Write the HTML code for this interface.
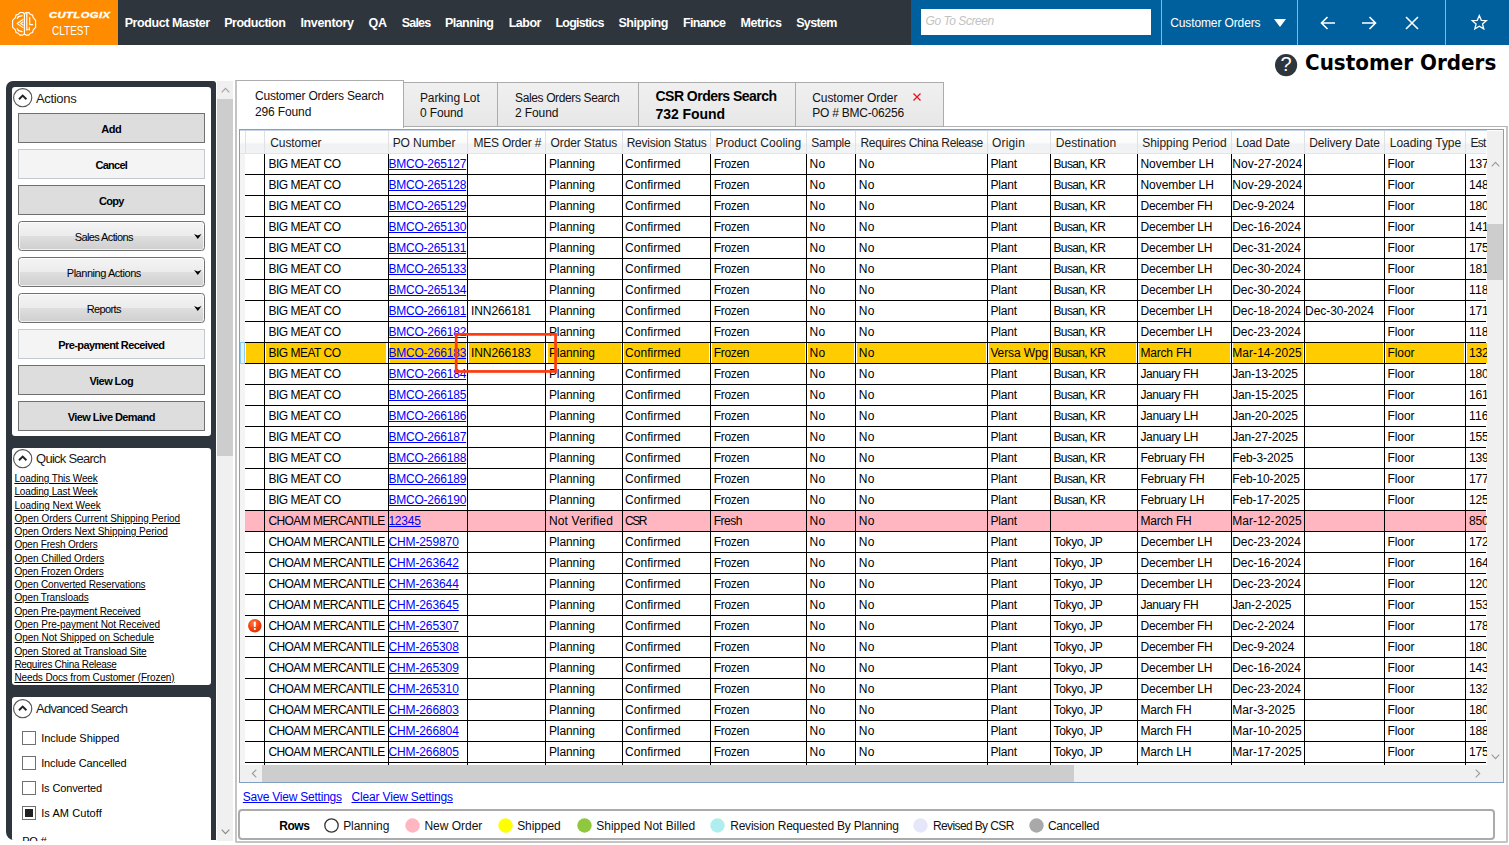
<!DOCTYPE html>
<html lang="en"><head><meta charset="utf-8"><title>Customer Orders</title>
<style>
html,body{margin:0;padding:0;background:#fff;}
body{width:1509px;height:845px;position:relative;overflow:hidden;font-family:"Liberation Sans",Arial,sans-serif;font-size:12px;color:#000;}
.b{position:absolute;box-sizing:border-box;}
.t{position:absolute;white-space:nowrap;}
svg{position:absolute;overflow:visible;}
a{color:inherit;}
</style></head><body>

<div class="b" style="left:0.00px;top:0.00px;width:1509.00px;height:45.00px;background:#2e353d;"></div>
<div class="b" style="left:0.00px;top:0.00px;width:117.50px;height:45.00px;background:#ff8c00;"></div>
<div class="b" style="left:910.50px;top:0.00px;width:598.50px;height:45.00px;background:#00609e;"></div>
<div class="b" style="left:921.40px;top:9.00px;width:229.20px;height:26.30px;background:#fff;"></div>
<span class="t" style="left:925.60px;top:13.34px;font-size:12px;line-height:16px;color:#c2c2c2;letter-spacing:-0.467px;font-style:italic;">Go To Screen</span>
<div class="b" style="left:1161.00px;top:0.00px;width:1.00px;height:45.00px;background:rgba(255,255,255,.55);"></div>
<div class="b" style="left:1297.00px;top:0.00px;width:1.00px;height:45.00px;background:rgba(255,255,255,.55);"></div>
<div class="b" style="left:1445.00px;top:0.00px;width:1.00px;height:45.00px;background:rgba(255,255,255,.55);"></div>
<span class="t" style="left:1170.20px;top:15.14px;font-size:12px;line-height:16px;color:#fff;letter-spacing:-0.117px;">Customer Orders</span>
<svg style="left:1273.5px;top:18.5px" width="12" height="8" viewBox="0 0 12 8"><path d="M0 0H12L6 8Z" fill="#fff"/></svg>
<svg style="left:1319px;top:14px" width="18" height="18" viewBox="0 0 18 18" fill="none" stroke="#fff" stroke-width="1.6"><path d="M16 9H2.5M8.5 3L2.5 9L8.5 15"/></svg>
<svg style="left:1360px;top:14px" width="18" height="18" viewBox="0 0 18 18" fill="none" stroke="#fff" stroke-width="1.6"><path d="M2 9H15.5M9.5 3L15.5 9L9.5 15"/></svg>
<svg style="left:1402.5px;top:14px" width="18" height="18" viewBox="0 0 18 18" fill="none" stroke="#fff" stroke-width="1.6"><path d="M3 3L15 15M15 3L3 15"/></svg>
<svg style="left:1470.6px;top:14.3px" width="16.6" height="16.6" viewBox="0 0 19 19" fill="none" stroke="#fff" stroke-width="1.5" stroke-linejoin="miter"><path d="M9.5 1.8L11.8 7.2L17.6 7.6L13.2 11.4L14.6 17.1L9.5 14L4.4 17.1L5.8 11.4L1.4 7.6L7.2 7.2Z"/></svg>
<span class="t" style="left:124.70px;top:15.07px;font-size:12.5px;line-height:17px;color:#fff;letter-spacing:-0.432px;font-weight:bold;">Product Master</span>
<span class="t" style="left:224.20px;top:15.07px;font-size:12.5px;line-height:17px;color:#fff;letter-spacing:-0.477px;font-weight:bold;">Production</span>
<span class="t" style="left:300.45px;top:15.07px;font-size:12.5px;line-height:17px;color:#fff;letter-spacing:-0.340px;font-weight:bold;">Inventory</span>
<span class="t" style="left:368.45px;top:15.07px;font-size:12.5px;line-height:17px;color:#fff;letter-spacing:-0.275px;font-weight:bold;">QA</span>
<span class="t" style="left:401.70px;top:15.07px;font-size:12.5px;line-height:17px;color:#fff;letter-spacing:-0.793px;font-weight:bold;">Sales</span>
<span class="t" style="left:444.95px;top:15.07px;font-size:12.5px;line-height:17px;color:#fff;letter-spacing:-0.541px;font-weight:bold;">Planning</span>
<span class="t" style="left:508.70px;top:15.07px;font-size:12.5px;line-height:17px;color:#fff;letter-spacing:-0.505px;font-weight:bold;">Labor</span>
<span class="t" style="left:555.45px;top:15.07px;font-size:12.5px;line-height:17px;color:#fff;letter-spacing:-0.741px;font-weight:bold;">Logistics</span>
<span class="t" style="left:618.45px;top:15.07px;font-size:12.5px;line-height:17px;color:#fff;letter-spacing:-0.501px;font-weight:bold;">Shipping</span>
<span class="t" style="left:682.95px;top:15.07px;font-size:12.5px;line-height:17px;color:#fff;letter-spacing:-0.684px;font-weight:bold;">Finance</span>
<span class="t" style="left:740.45px;top:15.07px;font-size:12.5px;line-height:17px;color:#fff;letter-spacing:-0.367px;font-weight:bold;">Metrics</span>
<span class="t" style="left:796.20px;top:15.07px;font-size:12.5px;line-height:17px;color:#fff;letter-spacing:-0.670px;font-weight:bold;">System</span>
<svg style="left:12.1px;top:11.8px" width="24" height="24" viewBox="0 0 24 24" fill="none" stroke="#fff" stroke-width="1.15" stroke-linejoin="round" stroke-linecap="round">
<path d="M12.4 1.7L10.8 0.5L8 0.5L6.3 2.3L4 3.1L3.4 5.7L0.6 8.3V15.3L3.4 17.9L4 20.5L6.3 21.3L8 23.1H10.8L12.4 21.9L14 23.1H16.6L18.3 21.3L20.6 20.5L21.2 17.9L23.6 15.3V8.3L21.2 5.7L20.6 3.1L18.3 2.3L16.6 0.5L14 0.5Z"/>
<path d="M12.4 1.7V21.9"/>
<path d="M10.2 3.6L6.6 4.6L5.2 6.4M11 7.6L5 11.4L11 15.6M11 10.1L8.6 11.5L11 13.1M5.2 16.6L6.6 18.6L10.2 19.6" stroke-width="1.15"/>
<path d="M14.8 2.2V18.2M17.7 5.4V12.6H20.7M17.3 15.2V18" stroke-width="1.15"/>
<circle cx="6.3" cy="4.7" r="0.7" fill="#fff" stroke="none"/><circle cx="6.3" cy="18.5" r="0.7" fill="#fff" stroke="none"/><circle cx="14.8" cy="1.9" r="0.8" fill="#fff" stroke="none"/><circle cx="15.8" cy="17.4" r="0.7" fill="#fff" stroke="none"/><circle cx="17.4" cy="17.4" r="0.7" fill="#fff" stroke="none"/>
</svg>
<span class="t" style="left:49.00px;top:9.22px;font-size:8.6px;line-height:12px;color:#fff;letter-spacing:0.350px;font-weight:bold;font-style:italic;-webkit-text-stroke:0.35px #fff;transform-origin:0 50%;transform:scaleX(1.302);">CUTLOGIX</span>
<span class="t" style="left:52.20px;top:22.73px;font-size:12.6px;line-height:17px;color:#fff;transform-origin:0 50%;transform:scaleX(0.794);">CLTEST</span>
<svg style="left:1274.9px;top:53.6px" width="22.2" height="22.2" viewBox="0 0 22.2 22.2"><circle cx="11.1" cy="11.1" r="11.1" fill="#2e353d"/></svg>
<span class="t" style="left:1286.00px;top:51.17px;font-size:20px;line-height:27px;color:#fff;transform:translateX(-50%);">?</span>
<span class="t" style="left:1305.20px;top:47.88px;font-size:21.6px;line-height:29px;color:#000;font-weight:bold;font-family:'DejaVu Sans','Liberation Sans',sans-serif;transform-origin:0 50%;transform:scaleX(0.9232);">Customer Orders</span>
<div class="b" style="left:6.4px;top:81.2px;width:209.6px;height:759.3px;background:#2e353d;border-radius:7px 3px 0 8px;overflow:hidden;">
<div class="b" style="left:5.60px;top:5.80px;width:199.00px;height:348.80px;background:#fff;border-radius:3px;"></div>
<div class="b" style="left:5.60px;top:366.60px;width:199.00px;height:237.50px;background:#fff;border-radius:3px;"></div>
<div class="b" style="left:5.60px;top:616.30px;width:199.00px;height:162.50px;background:#fff;border-radius:3px;"></div>
</div>
<svg style="left:13.3px;top:88.30px" width="19.4" height="19.4" viewBox="0 0 19.4 19.4" fill="none"><circle cx="9.7" cy="9.7" r="9.1" stroke="#555" stroke-width="1.15" fill="#fff"/><path d="M6 11.3L9.7 7.6L13.4 11.3" stroke="#222" stroke-width="1.9"/></svg>
<span class="t" style="left:36.00px;top:89.60px;font-size:13px;line-height:17px;color:#1a1a1a;letter-spacing:-0.333px;">Actions</span>
<svg style="left:13.3px;top:449.00px" width="19.4" height="19.4" viewBox="0 0 19.4 19.4" fill="none"><circle cx="9.7" cy="9.7" r="9.1" stroke="#555" stroke-width="1.15" fill="#fff"/><path d="M6 11.3L9.7 7.6L13.4 11.3" stroke="#222" stroke-width="1.9"/></svg>
<span class="t" style="left:36.00px;top:450.30px;font-size:13px;line-height:17px;color:#1a1a1a;letter-spacing:-0.719px;">Quick Search</span>
<svg style="left:13.3px;top:698.60px" width="19.4" height="19.4" viewBox="0 0 19.4 19.4" fill="none"><circle cx="9.7" cy="9.7" r="9.1" stroke="#555" stroke-width="1.15" fill="#fff"/><path d="M6 11.3L9.7 7.6L13.4 11.3" stroke="#222" stroke-width="1.9"/></svg>
<span class="t" style="left:36.00px;top:699.90px;font-size:13px;line-height:17px;color:#1a1a1a;letter-spacing:-0.762px;">Advanced Search</span>
<div class="b" style="left:17.50px;top:113.40px;width:187.50px;height:29.50px;background:#dddddd;border:1px solid #707070;"></div>
<span class="t" style="left:111.30px;top:121.54px;font-size:11px;line-height:15px;color:#000;letter-spacing:-0.494px;font-weight:bold;transform:translateX(-50%);">Add</span>
<div class="b" style="left:17.50px;top:149.40px;width:187.50px;height:29.50px;background:#f4f4f4;border:1px solid #c3c9ce;"></div>
<span class="t" style="left:111.30px;top:157.54px;font-size:11px;line-height:15px;color:#000;letter-spacing:-0.746px;font-weight:bold;transform:translateX(-50%);">Cancel</span>
<div class="b" style="left:17.50px;top:185.40px;width:187.50px;height:29.50px;background:#dddddd;border:1px solid #707070;"></div>
<span class="t" style="left:111.30px;top:193.54px;font-size:11px;line-height:15px;color:#000;letter-spacing:-0.725px;font-weight:bold;transform:translateX(-50%);">Copy</span>
<div class="b" style="left:17.50px;top:329.40px;width:187.50px;height:29.50px;background:#f4f4f4;border:1px solid #c3c9ce;"></div>
<span class="t" style="left:111.30px;top:337.54px;font-size:11px;line-height:15px;color:#000;letter-spacing:-0.595px;font-weight:bold;transform:translateX(-50%);">Pre-payment Received</span>
<div class="b" style="left:17.50px;top:365.40px;width:187.50px;height:29.50px;background:#dddddd;border:1px solid #707070;"></div>
<span class="t" style="left:111.30px;top:373.54px;font-size:11px;line-height:15px;color:#000;letter-spacing:-0.573px;font-weight:bold;transform:translateX(-50%);">View Log</span>
<div class="b" style="left:17.50px;top:401.40px;width:187.50px;height:29.50px;background:#dddddd;border:1px solid #707070;"></div>
<span class="t" style="left:111.30px;top:409.54px;font-size:11px;line-height:15px;color:#000;letter-spacing:-0.574px;font-weight:bold;transform:translateX(-50%);">View Live Demand</span>
<div class="b" style="left:17.50px;top:221.00px;width:187.50px;height:30.00px;background:linear-gradient(#f4f4f4 0%,#ececec 49%,#dedede 51%,#cfcfcf 100%);border:1px solid #707070;border-radius:3.5px;box-shadow:inset 0 0 0 1px rgba(255,255,255,.7);"></div>
<span class="t" style="left:103.80px;top:229.59px;font-size:11px;line-height:15px;color:#000;letter-spacing:-0.611px;transform:translateX(-50%);">Sales Actions</span>
<svg style="left:193.7px;top:233.80px" width="7.6" height="4.9" viewBox="0 0 7.6 4.9"><path d="M0 0L3.8 1.5L7.6 0L3.8 4.9Z" fill="#000"/></svg>
<div class="b" style="left:17.50px;top:257.00px;width:187.50px;height:30.00px;background:linear-gradient(#f4f4f4 0%,#ececec 49%,#dedede 51%,#cfcfcf 100%);border:1px solid #707070;border-radius:3.5px;box-shadow:inset 0 0 0 1px rgba(255,255,255,.7);"></div>
<span class="t" style="left:103.80px;top:265.59px;font-size:11px;line-height:15px;color:#000;letter-spacing:-0.452px;transform:translateX(-50%);">Planning Actions</span>
<svg style="left:193.7px;top:269.80px" width="7.6" height="4.9" viewBox="0 0 7.6 4.9"><path d="M0 0L3.8 1.5L7.6 0L3.8 4.9Z" fill="#000"/></svg>
<div class="b" style="left:17.50px;top:293.00px;width:187.50px;height:30.00px;background:linear-gradient(#f4f4f4 0%,#ececec 49%,#dedede 51%,#cfcfcf 100%);border:1px solid #707070;border-radius:3.5px;box-shadow:inset 0 0 0 1px rgba(255,255,255,.7);"></div>
<span class="t" style="left:103.80px;top:301.59px;font-size:11px;line-height:15px;color:#000;letter-spacing:-0.631px;transform:translateX(-50%);">Reports</span>
<svg style="left:193.7px;top:305.80px" width="7.6" height="4.9" viewBox="0 0 7.6 4.9"><path d="M0 0L3.8 1.5L7.6 0L3.8 4.9Z" fill="#000"/></svg>
<span class="t" style="left:14.40px;top:472.04px;font-size:10px;line-height:13px;color:#000;letter-spacing:-0.115px;text-decoration:underline;">Loading This Week</span>
<span class="t" style="left:14.40px;top:485.04px;font-size:10px;line-height:13px;color:#000;letter-spacing:-0.134px;text-decoration:underline;">Loading Last Week</span>
<span class="t" style="left:14.40px;top:499.04px;font-size:10px;line-height:13px;color:#000;letter-spacing:-0.039px;text-decoration:underline;">Loading Next Week</span>
<span class="t" style="left:14.40px;top:512.03px;font-size:10px;line-height:13px;color:#000;letter-spacing:-0.045px;text-decoration:underline;">Open Orders Current Shipping Period</span>
<span class="t" style="left:14.40px;top:525.03px;font-size:10px;line-height:13px;color:#000;letter-spacing:-0.037px;text-decoration:underline;">Open Orders Next Shipping Period</span>
<span class="t" style="left:14.40px;top:538.03px;font-size:10px;line-height:13px;color:#000;letter-spacing:-0.179px;text-decoration:underline;">Open Fresh Orders</span>
<span class="t" style="left:14.40px;top:552.03px;font-size:10px;line-height:13px;color:#000;letter-spacing:-0.070px;text-decoration:underline;">Open Chilled Orders</span>
<span class="t" style="left:14.40px;top:565.03px;font-size:10px;line-height:13px;color:#000;letter-spacing:-0.137px;text-decoration:underline;">Open Frozen Orders</span>
<span class="t" style="left:14.40px;top:578.03px;font-size:10px;line-height:13px;color:#000;letter-spacing:-0.127px;text-decoration:underline;">Open Converted Reservations</span>
<span class="t" style="left:14.40px;top:591.03px;font-size:10px;line-height:13px;color:#000;letter-spacing:-0.129px;text-decoration:underline;">Open Transloads</span>
<span class="t" style="left:14.40px;top:605.03px;font-size:10px;line-height:13px;color:#000;letter-spacing:-0.113px;text-decoration:underline;">Open Pre-payment Received</span>
<span class="t" style="left:14.40px;top:618.03px;font-size:10px;line-height:13px;color:#000;letter-spacing:-0.058px;text-decoration:underline;">Open Pre-payment Not Received</span>
<span class="t" style="left:14.40px;top:631.03px;font-size:10px;line-height:13px;color:#000;letter-spacing:-0.033px;text-decoration:underline;">Open Not Shipped on Schedule</span>
<span class="t" style="left:14.40px;top:645.03px;font-size:10px;line-height:13px;color:#000;letter-spacing:-0.081px;text-decoration:underline;">Open Stored at Transload Site</span>
<span class="t" style="left:14.40px;top:658.03px;font-size:10px;line-height:13px;color:#000;letter-spacing:-0.290px;text-decoration:underline;">Requires China Release</span>
<span class="t" style="left:14.40px;top:671.03px;font-size:10px;line-height:13px;color:#000;letter-spacing:-0.115px;text-decoration:underline;">Needs Docs from Customer (Frozen)</span>
<div class="b" style="left:22.30px;top:731.30px;width:14.00px;height:14.00px;background:#fff;border:1px solid #707070;"></div>
<span class="t" style="left:41.20px;top:730.99px;font-size:11px;line-height:15px;color:#000;letter-spacing:-0.046px;">Include Shipped</span>
<div class="b" style="left:22.30px;top:756.30px;width:14.00px;height:14.00px;background:#fff;border:1px solid #707070;"></div>
<span class="t" style="left:41.20px;top:755.99px;font-size:11px;line-height:15px;color:#000;letter-spacing:-0.124px;">Include Cancelled</span>
<div class="b" style="left:22.30px;top:781.30px;width:14.00px;height:14.00px;background:#fff;border:1px solid #707070;"></div>
<span class="t" style="left:41.20px;top:780.99px;font-size:11px;line-height:15px;color:#000;letter-spacing:-0.124px;">Is Converted</span>
<div class="b" style="left:22.30px;top:806.30px;width:14.00px;height:14.00px;background:#fff;border:1px solid #707070;"></div>
<div class="b" style="left:25.30px;top:809.30px;width:8.00px;height:8.00px;background:#212121;"></div>
<span class="t" style="left:41.20px;top:805.99px;font-size:11px;line-height:15px;color:#000;letter-spacing:0.081px;">Is AM Cutoff</span>
<div class="b" style="left:12px;top:826px;width:199px;height:14.5px;overflow:hidden;">
<span class="t" style="left:10.30px;top:7.69px;font-size:11px;line-height:15px;color:#000;letter-spacing:-0.274px;">PO #</span>
</div>
<div class="b" style="left:216.50px;top:81.00px;width:16.30px;height:760.00px;background:#f0f0f0;"></div>
<div class="b" style="left:216.50px;top:98.50px;width:16.30px;height:357.00px;background:#cdcdcd;"></div>
<svg style="left:220.5px;top:87px" width="9" height="6" viewBox="0 0 9 6" fill="none" stroke="#a3a3a3" stroke-width="1.2"><path d="M0.7 5.3L4.5 1.3L8.3 5.3"/></svg>
<svg style="left:220.5px;top:829px" width="9" height="6" viewBox="0 0 9 6" fill="none" stroke="#8a8a8a" stroke-width="1.2"><path d="M0.7 0.7L4.5 4.7L8.3 0.7"/></svg>
<div class="b" style="left:235.00px;top:126.00px;width:1273.00px;height:716.70px;background:#fff;border:2px solid #c4c4c4;border-top:1px solid #b4b4b4;border-radius:0 0 2px 2px;"></div>
<div class="b" style="left:402.00px;top:82.00px;width:95.50px;height:45.00px;background:linear-gradient(#f0f0f0,#e7e7e7);border:1px solid #acacac;"></div>
<div class="b" style="left:496.50px;top:82.00px;width:142.00px;height:45.00px;background:linear-gradient(#f0f0f0,#e7e7e7);border:1px solid #acacac;"></div>
<div class="b" style="left:637.50px;top:82.00px;width:158.00px;height:45.00px;background:linear-gradient(#f0f0f0,#e7e7e7);border:1px solid #acacac;"></div>
<div class="b" style="left:794.50px;top:82.00px;width:149.50px;height:45.00px;background:linear-gradient(#f0f0f0,#e7e7e7);border:1px solid #acacac;"></div>
<div class="b" style="left:235.00px;top:79.50px;width:169.00px;height:48.00px;background:#fff;border:1px solid #acacac;border-bottom:none;border-left:2px solid #c4c4c4;"></div>
<span class="t" style="left:255.00px;top:88.04px;font-size:12px;line-height:16px;color:#111;letter-spacing:-0.208px;">Customer Orders Search</span>
<span class="t" style="left:255.00px;top:103.74px;font-size:12px;line-height:16px;color:#111;letter-spacing:-0.131px;">296 Found</span>
<span class="t" style="left:419.90px;top:89.64px;font-size:12px;line-height:16px;color:#111;letter-spacing:-0.088px;">Parking Lot</span>
<span class="t" style="left:419.90px;top:105.44px;font-size:12px;line-height:16px;color:#111;letter-spacing:-0.110px;">0 Found</span>
<span class="t" style="left:515.00px;top:89.64px;font-size:12px;line-height:16px;color:#111;letter-spacing:-0.368px;">Sales Orders Search</span>
<span class="t" style="left:515.00px;top:105.44px;font-size:12px;line-height:16px;color:#111;letter-spacing:-0.110px;">2 Found</span>
<span class="t" style="left:655.50px;top:86.65px;font-size:14px;line-height:19px;color:#000;letter-spacing:-0.526px;font-weight:bold;">CSR Orders Search</span>
<span class="t" style="left:655.50px;top:104.85px;font-size:14px;line-height:19px;color:#000;letter-spacing:-0.057px;font-weight:bold;">732 Found</span>
<span class="t" style="left:812.20px;top:89.64px;font-size:12px;line-height:16px;color:#111;letter-spacing:-0.060px;">Customer Order</span>
<span class="t" style="left:812.20px;top:105.44px;font-size:12px;line-height:16px;color:#111;letter-spacing:-0.218px;">PO # BMC-06256</span>
<svg style="left:913px;top:92.5px" width="8" height="8" viewBox="0 0 8 8" fill="none" stroke="#e81123" stroke-width="1.3"><path d="M0.5 0.5L7.5 7.5M7.5 0.5L0.5 7.5"/></svg>
<div class="b" style="left:238.70px;top:129.00px;width:1265.50px;height:653.90px;background:#fff;border:1px solid #7f9fc4;"></div>
<div class="b" style="left:0;top:0;width:1486.5px;height:764.5px;overflow:hidden;">
<div class="b" style="left:239.70px;top:130.00px;width:1246.80px;height:23.50px;background:linear-gradient(#ffffff 0%,#fcfcfd 50%,#f0f1f3 62%,#f3f4f6 100%);"></div>
<div class="b" style="left:239.70px;top:130.00px;width:1263.50px;height:1.00px;background:#c5d4e6;"></div>
<div class="b" style="left:239.70px;top:153.00px;width:1246.80px;height:1.00px;background:#e2e4e8;"></div>
<div class="b" style="left:239.70px;top:153.50px;width:5.50px;height:611.00px;background:#f4f4f5;"></div>
<div class="b" style="left:245.00px;top:131.00px;width:1.00px;height:22.00px;background:#dfe1e5;"></div>
<div class="b" style="left:264.00px;top:131.00px;width:1.00px;height:22.00px;background:#dfe1e5;"></div>
<div class="b" style="left:388.00px;top:131.00px;width:1.00px;height:22.00px;background:#dfe1e5;"></div>
<div class="b" style="left:467.00px;top:131.00px;width:1.00px;height:22.00px;background:#dfe1e5;"></div>
<div class="b" style="left:545.00px;top:131.00px;width:1.00px;height:22.00px;background:#dfe1e5;"></div>
<div class="b" style="left:622.00px;top:131.00px;width:1.00px;height:22.00px;background:#dfe1e5;"></div>
<div class="b" style="left:710.00px;top:131.00px;width:1.00px;height:22.00px;background:#dfe1e5;"></div>
<div class="b" style="left:806.00px;top:131.00px;width:1.00px;height:22.00px;background:#dfe1e5;"></div>
<div class="b" style="left:855.00px;top:131.00px;width:1.00px;height:22.00px;background:#dfe1e5;"></div>
<div class="b" style="left:987.00px;top:131.00px;width:1.00px;height:22.00px;background:#dfe1e5;"></div>
<div class="b" style="left:1050.00px;top:131.00px;width:1.00px;height:22.00px;background:#dfe1e5;"></div>
<div class="b" style="left:1137.00px;top:131.00px;width:1.00px;height:22.00px;background:#dfe1e5;"></div>
<div class="b" style="left:1231.00px;top:131.00px;width:1.00px;height:22.00px;background:#dfe1e5;"></div>
<div class="b" style="left:1304.00px;top:131.00px;width:1.00px;height:22.00px;background:#dfe1e5;"></div>
<div class="b" style="left:1384.00px;top:131.00px;width:1.00px;height:22.00px;background:#dfe1e5;"></div>
<div class="b" style="left:1465.00px;top:131.00px;width:1.00px;height:22.00px;background:#dfe1e5;"></div>
<span class="t" style="left:270.30px;top:134.54px;font-size:12px;line-height:16px;color:#1c1c1c;letter-spacing:-0.106px;">Customer</span>
<span class="t" style="left:392.70px;top:134.54px;font-size:12px;line-height:16px;color:#1c1c1c;letter-spacing:-0.080px;">PO Number</span>
<span class="t" style="left:473.50px;top:134.54px;font-size:12px;line-height:16px;color:#1c1c1c;letter-spacing:-0.219px;">MES Order #</span>
<span class="t" style="left:550.60px;top:134.54px;font-size:12px;line-height:16px;color:#1c1c1c;letter-spacing:-0.128px;">Order Status</span>
<span class="t" style="left:626.70px;top:134.54px;font-size:12px;line-height:16px;color:#1c1c1c;letter-spacing:-0.245px;">Revision Status</span>
<span class="t" style="left:715.40px;top:134.54px;font-size:12px;line-height:16px;color:#1c1c1c;letter-spacing:0.028px;">Product Cooling</span>
<span class="t" style="left:811.30px;top:134.54px;font-size:12px;line-height:16px;color:#1c1c1c;letter-spacing:-0.276px;">Sample</span>
<span class="t" style="left:860.50px;top:134.54px;font-size:12px;line-height:16px;color:#1c1c1c;letter-spacing:-0.348px;">Requires China Release</span>
<span class="t" style="left:992.10px;top:134.54px;font-size:12px;line-height:16px;color:#1c1c1c;letter-spacing:0.142px;">Origin</span>
<span class="t" style="left:1055.80px;top:134.54px;font-size:12px;line-height:16px;color:#1c1c1c;letter-spacing:0.036px;">Destination</span>
<span class="t" style="left:1142.20px;top:134.54px;font-size:12px;line-height:16px;color:#1c1c1c;letter-spacing:-0.024px;">Shipping Period</span>
<span class="t" style="left:1235.90px;top:134.54px;font-size:12px;line-height:16px;color:#1c1c1c;letter-spacing:-0.153px;">Load Date</span>
<span class="t" style="left:1309.20px;top:134.54px;font-size:12px;line-height:16px;color:#1c1c1c;letter-spacing:-0.105px;">Delivery Date</span>
<span class="t" style="left:1389.80px;top:134.54px;font-size:12px;line-height:16px;color:#1c1c1c;letter-spacing:-0.046px;">Loading Type</span>
<span class="t" style="left:1470.40px;top:134.54px;font-size:12px;line-height:16px;color:#1c1c1c;letter-spacing:-0.703px;">Est</span>
<span class="t" style="left:268.40px;top:155.84px;font-size:12px;line-height:16px;color:#000;letter-spacing:-0.484px;">BIG MEAT CO</span>
<span class="t" style="left:388.40px;top:155.84px;font-size:12px;line-height:16px;color:#0000ff;letter-spacing:-0.209px;text-decoration:underline;">BMCO-265127</span>
<span class="t" style="left:548.90px;top:155.84px;font-size:12px;line-height:16px;color:#000;letter-spacing:-0.084px;">Planning</span>
<span class="t" style="left:625.00px;top:155.84px;font-size:12px;line-height:16px;color:#000;letter-spacing:0.041px;">Confirmed</span>
<span class="t" style="left:713.70px;top:155.84px;font-size:12px;line-height:16px;color:#000;letter-spacing:-0.299px;">Frozen</span>
<span class="t" style="left:809.60px;top:155.84px;font-size:12px;line-height:16px;color:#000;letter-spacing:0.337px;">No</span>
<span class="t" style="left:858.80px;top:155.84px;font-size:12px;line-height:16px;color:#000;letter-spacing:0.337px;">No</span>
<span class="t" style="left:990.40px;top:155.84px;font-size:12px;line-height:16px;color:#000;letter-spacing:-0.155px;">Plant</span>
<span class="t" style="left:1053.50px;top:155.84px;font-size:12px;line-height:16px;color:#000;letter-spacing:-0.633px;">Busan, KR</span>
<span class="t" style="left:1140.50px;top:155.84px;font-size:12px;line-height:16px;color:#000;letter-spacing:-0.065px;">November LH</span>
<span class="t" style="left:1232.20px;top:155.84px;font-size:12px;line-height:16px;color:#000;letter-spacing:0.072px;">Nov-27-2024</span>
<span class="t" style="left:1387.50px;top:155.84px;font-size:12px;line-height:16px;color:#000;letter-spacing:-0.066px;">Floor</span>
<span class="t" style="left:1469.10px;top:155.84px;font-size:12px;line-height:16px;color:#000;letter-spacing:-0.205px;">137</span>
<span class="t" style="left:268.40px;top:176.84px;font-size:12px;line-height:16px;color:#000;letter-spacing:-0.484px;">BIG MEAT CO</span>
<span class="t" style="left:388.40px;top:176.84px;font-size:12px;line-height:16px;color:#0000ff;letter-spacing:-0.209px;text-decoration:underline;">BMCO-265128</span>
<span class="t" style="left:548.90px;top:176.84px;font-size:12px;line-height:16px;color:#000;letter-spacing:-0.084px;">Planning</span>
<span class="t" style="left:625.00px;top:176.84px;font-size:12px;line-height:16px;color:#000;letter-spacing:0.041px;">Confirmed</span>
<span class="t" style="left:713.70px;top:176.84px;font-size:12px;line-height:16px;color:#000;letter-spacing:-0.299px;">Frozen</span>
<span class="t" style="left:809.60px;top:176.84px;font-size:12px;line-height:16px;color:#000;letter-spacing:0.337px;">No</span>
<span class="t" style="left:858.80px;top:176.84px;font-size:12px;line-height:16px;color:#000;letter-spacing:0.337px;">No</span>
<span class="t" style="left:990.40px;top:176.84px;font-size:12px;line-height:16px;color:#000;letter-spacing:-0.155px;">Plant</span>
<span class="t" style="left:1053.50px;top:176.84px;font-size:12px;line-height:16px;color:#000;letter-spacing:-0.633px;">Busan, KR</span>
<span class="t" style="left:1140.50px;top:176.84px;font-size:12px;line-height:16px;color:#000;letter-spacing:-0.065px;">November LH</span>
<span class="t" style="left:1232.20px;top:176.84px;font-size:12px;line-height:16px;color:#000;letter-spacing:0.072px;">Nov-29-2024</span>
<span class="t" style="left:1387.50px;top:176.84px;font-size:12px;line-height:16px;color:#000;letter-spacing:-0.066px;">Floor</span>
<span class="t" style="left:1469.10px;top:176.84px;font-size:12px;line-height:16px;color:#000;letter-spacing:-0.205px;">148</span>
<span class="t" style="left:268.40px;top:197.84px;font-size:12px;line-height:16px;color:#000;letter-spacing:-0.484px;">BIG MEAT CO</span>
<span class="t" style="left:388.40px;top:197.84px;font-size:12px;line-height:16px;color:#0000ff;letter-spacing:-0.209px;text-decoration:underline;">BMCO-265129</span>
<span class="t" style="left:548.90px;top:197.84px;font-size:12px;line-height:16px;color:#000;letter-spacing:-0.084px;">Planning</span>
<span class="t" style="left:625.00px;top:197.84px;font-size:12px;line-height:16px;color:#000;letter-spacing:0.041px;">Confirmed</span>
<span class="t" style="left:713.70px;top:197.84px;font-size:12px;line-height:16px;color:#000;letter-spacing:-0.299px;">Frozen</span>
<span class="t" style="left:809.60px;top:197.84px;font-size:12px;line-height:16px;color:#000;letter-spacing:0.337px;">No</span>
<span class="t" style="left:858.80px;top:197.84px;font-size:12px;line-height:16px;color:#000;letter-spacing:0.337px;">No</span>
<span class="t" style="left:990.40px;top:197.84px;font-size:12px;line-height:16px;color:#000;letter-spacing:-0.155px;">Plant</span>
<span class="t" style="left:1053.50px;top:197.84px;font-size:12px;line-height:16px;color:#000;letter-spacing:-0.633px;">Busan, KR</span>
<span class="t" style="left:1140.50px;top:197.84px;font-size:12px;line-height:16px;color:#000;letter-spacing:-0.244px;">December FH</span>
<span class="t" style="left:1232.20px;top:197.84px;font-size:12px;line-height:16px;color:#000;letter-spacing:-0.052px;">Dec-9-2024</span>
<span class="t" style="left:1387.50px;top:197.84px;font-size:12px;line-height:16px;color:#000;letter-spacing:-0.066px;">Floor</span>
<span class="t" style="left:1469.10px;top:197.84px;font-size:12px;line-height:16px;color:#000;letter-spacing:-0.205px;">180</span>
<span class="t" style="left:268.40px;top:218.84px;font-size:12px;line-height:16px;color:#000;letter-spacing:-0.484px;">BIG MEAT CO</span>
<span class="t" style="left:388.40px;top:218.84px;font-size:12px;line-height:16px;color:#0000ff;letter-spacing:-0.209px;text-decoration:underline;">BMCO-265130</span>
<span class="t" style="left:548.90px;top:218.84px;font-size:12px;line-height:16px;color:#000;letter-spacing:-0.084px;">Planning</span>
<span class="t" style="left:625.00px;top:218.84px;font-size:12px;line-height:16px;color:#000;letter-spacing:0.041px;">Confirmed</span>
<span class="t" style="left:713.70px;top:218.84px;font-size:12px;line-height:16px;color:#000;letter-spacing:-0.299px;">Frozen</span>
<span class="t" style="left:809.60px;top:218.84px;font-size:12px;line-height:16px;color:#000;letter-spacing:0.337px;">No</span>
<span class="t" style="left:858.80px;top:218.84px;font-size:12px;line-height:16px;color:#000;letter-spacing:0.337px;">No</span>
<span class="t" style="left:990.40px;top:218.84px;font-size:12px;line-height:16px;color:#000;letter-spacing:-0.155px;">Plant</span>
<span class="t" style="left:1053.50px;top:218.84px;font-size:12px;line-height:16px;color:#000;letter-spacing:-0.633px;">Busan, KR</span>
<span class="t" style="left:1140.50px;top:218.84px;font-size:12px;line-height:16px;color:#000;letter-spacing:-0.204px;">December LH</span>
<span class="t" style="left:1232.20px;top:218.84px;font-size:12px;line-height:16px;color:#000;letter-spacing:-0.066px;">Dec-16-2024</span>
<span class="t" style="left:1387.50px;top:218.84px;font-size:12px;line-height:16px;color:#000;letter-spacing:-0.066px;">Floor</span>
<span class="t" style="left:1469.10px;top:218.84px;font-size:12px;line-height:16px;color:#000;letter-spacing:-0.205px;">141</span>
<span class="t" style="left:268.40px;top:239.84px;font-size:12px;line-height:16px;color:#000;letter-spacing:-0.484px;">BIG MEAT CO</span>
<span class="t" style="left:388.40px;top:239.84px;font-size:12px;line-height:16px;color:#0000ff;letter-spacing:-0.209px;text-decoration:underline;">BMCO-265131</span>
<span class="t" style="left:548.90px;top:239.84px;font-size:12px;line-height:16px;color:#000;letter-spacing:-0.084px;">Planning</span>
<span class="t" style="left:625.00px;top:239.84px;font-size:12px;line-height:16px;color:#000;letter-spacing:0.041px;">Confirmed</span>
<span class="t" style="left:713.70px;top:239.84px;font-size:12px;line-height:16px;color:#000;letter-spacing:-0.299px;">Frozen</span>
<span class="t" style="left:809.60px;top:239.84px;font-size:12px;line-height:16px;color:#000;letter-spacing:0.337px;">No</span>
<span class="t" style="left:858.80px;top:239.84px;font-size:12px;line-height:16px;color:#000;letter-spacing:0.337px;">No</span>
<span class="t" style="left:990.40px;top:239.84px;font-size:12px;line-height:16px;color:#000;letter-spacing:-0.155px;">Plant</span>
<span class="t" style="left:1053.50px;top:239.84px;font-size:12px;line-height:16px;color:#000;letter-spacing:-0.633px;">Busan, KR</span>
<span class="t" style="left:1140.50px;top:239.84px;font-size:12px;line-height:16px;color:#000;letter-spacing:-0.204px;">December LH</span>
<span class="t" style="left:1232.20px;top:239.84px;font-size:12px;line-height:16px;color:#000;letter-spacing:-0.066px;">Dec-31-2024</span>
<span class="t" style="left:1387.50px;top:239.84px;font-size:12px;line-height:16px;color:#000;letter-spacing:-0.066px;">Floor</span>
<span class="t" style="left:1469.10px;top:239.84px;font-size:12px;line-height:16px;color:#000;letter-spacing:-0.205px;">175</span>
<span class="t" style="left:268.40px;top:260.84px;font-size:12px;line-height:16px;color:#000;letter-spacing:-0.484px;">BIG MEAT CO</span>
<span class="t" style="left:388.40px;top:260.84px;font-size:12px;line-height:16px;color:#0000ff;letter-spacing:-0.209px;text-decoration:underline;">BMCO-265133</span>
<span class="t" style="left:548.90px;top:260.84px;font-size:12px;line-height:16px;color:#000;letter-spacing:-0.084px;">Planning</span>
<span class="t" style="left:625.00px;top:260.84px;font-size:12px;line-height:16px;color:#000;letter-spacing:0.041px;">Confirmed</span>
<span class="t" style="left:713.70px;top:260.84px;font-size:12px;line-height:16px;color:#000;letter-spacing:-0.299px;">Frozen</span>
<span class="t" style="left:809.60px;top:260.84px;font-size:12px;line-height:16px;color:#000;letter-spacing:0.337px;">No</span>
<span class="t" style="left:858.80px;top:260.84px;font-size:12px;line-height:16px;color:#000;letter-spacing:0.337px;">No</span>
<span class="t" style="left:990.40px;top:260.84px;font-size:12px;line-height:16px;color:#000;letter-spacing:-0.155px;">Plant</span>
<span class="t" style="left:1053.50px;top:260.84px;font-size:12px;line-height:16px;color:#000;letter-spacing:-0.633px;">Busan, KR</span>
<span class="t" style="left:1140.50px;top:260.84px;font-size:12px;line-height:16px;color:#000;letter-spacing:-0.204px;">December LH</span>
<span class="t" style="left:1232.20px;top:260.84px;font-size:12px;line-height:16px;color:#000;letter-spacing:-0.066px;">Dec-30-2024</span>
<span class="t" style="left:1387.50px;top:260.84px;font-size:12px;line-height:16px;color:#000;letter-spacing:-0.066px;">Floor</span>
<span class="t" style="left:1469.10px;top:260.84px;font-size:12px;line-height:16px;color:#000;letter-spacing:-0.205px;">181</span>
<span class="t" style="left:268.40px;top:281.84px;font-size:12px;line-height:16px;color:#000;letter-spacing:-0.484px;">BIG MEAT CO</span>
<span class="t" style="left:388.40px;top:281.84px;font-size:12px;line-height:16px;color:#0000ff;letter-spacing:-0.209px;text-decoration:underline;">BMCO-265134</span>
<span class="t" style="left:548.90px;top:281.84px;font-size:12px;line-height:16px;color:#000;letter-spacing:-0.084px;">Planning</span>
<span class="t" style="left:625.00px;top:281.84px;font-size:12px;line-height:16px;color:#000;letter-spacing:0.041px;">Confirmed</span>
<span class="t" style="left:713.70px;top:281.84px;font-size:12px;line-height:16px;color:#000;letter-spacing:-0.299px;">Frozen</span>
<span class="t" style="left:809.60px;top:281.84px;font-size:12px;line-height:16px;color:#000;letter-spacing:0.337px;">No</span>
<span class="t" style="left:858.80px;top:281.84px;font-size:12px;line-height:16px;color:#000;letter-spacing:0.337px;">No</span>
<span class="t" style="left:990.40px;top:281.84px;font-size:12px;line-height:16px;color:#000;letter-spacing:-0.155px;">Plant</span>
<span class="t" style="left:1053.50px;top:281.84px;font-size:12px;line-height:16px;color:#000;letter-spacing:-0.633px;">Busan, KR</span>
<span class="t" style="left:1140.50px;top:281.84px;font-size:12px;line-height:16px;color:#000;letter-spacing:-0.204px;">December LH</span>
<span class="t" style="left:1232.20px;top:281.84px;font-size:12px;line-height:16px;color:#000;letter-spacing:-0.066px;">Dec-30-2024</span>
<span class="t" style="left:1387.50px;top:281.84px;font-size:12px;line-height:16px;color:#000;letter-spacing:-0.066px;">Floor</span>
<span class="t" style="left:1469.10px;top:281.84px;font-size:12px;line-height:16px;color:#000;letter-spacing:0.092px;">118</span>
<span class="t" style="left:268.40px;top:302.84px;font-size:12px;line-height:16px;color:#000;letter-spacing:-0.484px;">BIG MEAT CO</span>
<span class="t" style="left:388.40px;top:302.84px;font-size:12px;line-height:16px;color:#0000ff;letter-spacing:-0.209px;text-decoration:underline;">BMCO-266181</span>
<span class="t" style="left:471.00px;top:302.84px;font-size:12px;line-height:16px;color:#000;letter-spacing:-0.084px;">INN266181</span>
<span class="t" style="left:548.90px;top:302.84px;font-size:12px;line-height:16px;color:#000;letter-spacing:-0.084px;">Planning</span>
<span class="t" style="left:625.00px;top:302.84px;font-size:12px;line-height:16px;color:#000;letter-spacing:0.041px;">Confirmed</span>
<span class="t" style="left:713.70px;top:302.84px;font-size:12px;line-height:16px;color:#000;letter-spacing:-0.299px;">Frozen</span>
<span class="t" style="left:809.60px;top:302.84px;font-size:12px;line-height:16px;color:#000;letter-spacing:0.337px;">No</span>
<span class="t" style="left:858.80px;top:302.84px;font-size:12px;line-height:16px;color:#000;letter-spacing:0.337px;">No</span>
<span class="t" style="left:990.40px;top:302.84px;font-size:12px;line-height:16px;color:#000;letter-spacing:-0.155px;">Plant</span>
<span class="t" style="left:1053.50px;top:302.84px;font-size:12px;line-height:16px;color:#000;letter-spacing:-0.633px;">Busan, KR</span>
<span class="t" style="left:1140.50px;top:302.84px;font-size:12px;line-height:16px;color:#000;letter-spacing:-0.204px;">December LH</span>
<span class="t" style="left:1232.20px;top:302.84px;font-size:12px;line-height:16px;color:#000;letter-spacing:-0.066px;">Dec-18-2024</span>
<span class="t" style="left:1305.10px;top:302.84px;font-size:12px;line-height:16px;color:#000;letter-spacing:-0.066px;">Dec-30-2024</span>
<span class="t" style="left:1387.50px;top:302.84px;font-size:12px;line-height:16px;color:#000;letter-spacing:-0.066px;">Floor</span>
<span class="t" style="left:1469.10px;top:302.84px;font-size:12px;line-height:16px;color:#000;letter-spacing:-0.205px;">171</span>
<span class="t" style="left:268.40px;top:323.84px;font-size:12px;line-height:16px;color:#000;letter-spacing:-0.484px;">BIG MEAT CO</span>
<span class="t" style="left:388.40px;top:323.84px;font-size:12px;line-height:16px;color:#0000ff;letter-spacing:-0.209px;text-decoration:underline;">BMCO-266182</span>
<span class="t" style="left:548.90px;top:323.84px;font-size:12px;line-height:16px;color:#000;letter-spacing:-0.084px;">Planning</span>
<span class="t" style="left:625.00px;top:323.84px;font-size:12px;line-height:16px;color:#000;letter-spacing:0.041px;">Confirmed</span>
<span class="t" style="left:713.70px;top:323.84px;font-size:12px;line-height:16px;color:#000;letter-spacing:-0.299px;">Frozen</span>
<span class="t" style="left:809.60px;top:323.84px;font-size:12px;line-height:16px;color:#000;letter-spacing:0.337px;">No</span>
<span class="t" style="left:858.80px;top:323.84px;font-size:12px;line-height:16px;color:#000;letter-spacing:0.337px;">No</span>
<span class="t" style="left:990.40px;top:323.84px;font-size:12px;line-height:16px;color:#000;letter-spacing:-0.155px;">Plant</span>
<span class="t" style="left:1053.50px;top:323.84px;font-size:12px;line-height:16px;color:#000;letter-spacing:-0.633px;">Busan, KR</span>
<span class="t" style="left:1140.50px;top:323.84px;font-size:12px;line-height:16px;color:#000;letter-spacing:-0.204px;">December LH</span>
<span class="t" style="left:1232.20px;top:323.84px;font-size:12px;line-height:16px;color:#000;letter-spacing:-0.066px;">Dec-23-2024</span>
<span class="t" style="left:1387.50px;top:323.84px;font-size:12px;line-height:16px;color:#000;letter-spacing:-0.066px;">Floor</span>
<span class="t" style="left:1469.10px;top:323.84px;font-size:12px;line-height:16px;color:#000;letter-spacing:0.092px;">118</span>
<div class="b" style="left:246.00px;top:343.30px;width:17.80px;height:19.60px;background:#ffcc00;"></div>
<div class="b" style="left:266.20px;top:343.30px;width:120.30px;height:19.60px;background:#ffcc00;"></div>
<div class="b" style="left:389.60px;top:343.30px;width:76.50px;height:19.60px;background:#ffcc00;"></div>
<div class="b" style="left:469.20px;top:343.30px;width:75.20px;height:19.60px;background:#ffcc00;"></div>
<div class="b" style="left:547.50px;top:343.30px;width:73.00px;height:19.60px;background:#ffcc00;"></div>
<div class="b" style="left:623.60px;top:343.30px;width:85.60px;height:19.60px;background:#ffcc00;"></div>
<div class="b" style="left:712.30px;top:343.30px;width:92.80px;height:19.60px;background:#ffcc00;"></div>
<div class="b" style="left:808.20px;top:343.30px;width:46.10px;height:19.60px;background:#ffcc00;"></div>
<div class="b" style="left:857.40px;top:343.30px;width:128.50px;height:19.60px;background:#ffcc00;"></div>
<div class="b" style="left:989.00px;top:343.30px;width:60.00px;height:19.60px;background:#ffcc00;"></div>
<div class="b" style="left:1052.10px;top:343.30px;width:83.90px;height:19.60px;background:#ffcc00;"></div>
<div class="b" style="left:1139.10px;top:343.30px;width:90.60px;height:19.60px;background:#ffcc00;"></div>
<div class="b" style="left:1232.80px;top:343.30px;width:70.20px;height:19.60px;background:#ffcc00;"></div>
<div class="b" style="left:1306.10px;top:343.30px;width:76.90px;height:19.60px;background:#ffcc00;"></div>
<div class="b" style="left:1386.10px;top:343.30px;width:78.10px;height:19.60px;background:#ffcc00;"></div>
<div class="b" style="left:1467.30px;top:343.30px;width:91.20px;height:19.60px;background:#ffcc00;"></div>
<div class="b" style="left:239.70px;top:342.30px;width:5.60px;height:21.40px;background:#e3f1fb;border:1px solid #8ccdf0;"></div>
<span class="t" style="left:268.40px;top:344.84px;font-size:12px;line-height:16px;color:#000;letter-spacing:-0.484px;">BIG MEAT CO</span>
<span class="t" style="left:388.40px;top:344.84px;font-size:12px;line-height:16px;color:#0000ff;letter-spacing:-0.209px;text-decoration:underline;">BMCO-266183</span>
<span class="t" style="left:471.00px;top:344.84px;font-size:12px;line-height:16px;color:#000;letter-spacing:-0.084px;">INN266183</span>
<span class="t" style="left:548.90px;top:344.84px;font-size:12px;line-height:16px;color:#000;letter-spacing:-0.084px;">Planning</span>
<span class="t" style="left:625.00px;top:344.84px;font-size:12px;line-height:16px;color:#000;letter-spacing:0.041px;">Confirmed</span>
<span class="t" style="left:713.70px;top:344.84px;font-size:12px;line-height:16px;color:#000;letter-spacing:-0.299px;">Frozen</span>
<span class="t" style="left:809.60px;top:344.84px;font-size:12px;line-height:16px;color:#000;letter-spacing:0.337px;">No</span>
<span class="t" style="left:858.80px;top:344.84px;font-size:12px;line-height:16px;color:#000;letter-spacing:0.337px;">No</span>
<span class="t" style="left:990.40px;top:344.84px;font-size:12px;line-height:16px;color:#000;letter-spacing:-0.111px;">Versa Wpg</span>
<span class="t" style="left:1053.50px;top:344.84px;font-size:12px;line-height:16px;color:#000;letter-spacing:-0.633px;">Busan, KR</span>
<span class="t" style="left:1140.50px;top:344.84px;font-size:12px;line-height:16px;color:#000;letter-spacing:-0.204px;">March FH</span>
<span class="t" style="left:1232.20px;top:344.84px;font-size:12px;line-height:16px;color:#000;letter-spacing:0.069px;">Mar-14-2025</span>
<span class="t" style="left:1387.50px;top:344.84px;font-size:12px;line-height:16px;color:#000;letter-spacing:-0.066px;">Floor</span>
<span class="t" style="left:1469.10px;top:344.84px;font-size:12px;line-height:16px;color:#000;letter-spacing:-0.205px;">132</span>
<span class="t" style="left:268.40px;top:365.84px;font-size:12px;line-height:16px;color:#000;letter-spacing:-0.484px;">BIG MEAT CO</span>
<span class="t" style="left:388.40px;top:365.84px;font-size:12px;line-height:16px;color:#0000ff;letter-spacing:-0.209px;text-decoration:underline;">BMCO-266184</span>
<span class="t" style="left:548.90px;top:365.84px;font-size:12px;line-height:16px;color:#000;letter-spacing:-0.084px;">Planning</span>
<span class="t" style="left:625.00px;top:365.84px;font-size:12px;line-height:16px;color:#000;letter-spacing:0.041px;">Confirmed</span>
<span class="t" style="left:713.70px;top:365.84px;font-size:12px;line-height:16px;color:#000;letter-spacing:-0.299px;">Frozen</span>
<span class="t" style="left:809.60px;top:365.84px;font-size:12px;line-height:16px;color:#000;letter-spacing:0.337px;">No</span>
<span class="t" style="left:858.80px;top:365.84px;font-size:12px;line-height:16px;color:#000;letter-spacing:0.337px;">No</span>
<span class="t" style="left:990.40px;top:365.84px;font-size:12px;line-height:16px;color:#000;letter-spacing:-0.155px;">Plant</span>
<span class="t" style="left:1053.50px;top:365.84px;font-size:12px;line-height:16px;color:#000;letter-spacing:-0.633px;">Busan, KR</span>
<span class="t" style="left:1140.50px;top:365.84px;font-size:12px;line-height:16px;color:#000;letter-spacing:-0.433px;">January FH</span>
<span class="t" style="left:1232.20px;top:365.84px;font-size:12px;line-height:16px;color:#000;letter-spacing:-0.165px;">Jan-13-2025</span>
<span class="t" style="left:1387.50px;top:365.84px;font-size:12px;line-height:16px;color:#000;letter-spacing:-0.066px;">Floor</span>
<span class="t" style="left:1469.10px;top:365.84px;font-size:12px;line-height:16px;color:#000;letter-spacing:-0.205px;">180</span>
<span class="t" style="left:268.40px;top:386.84px;font-size:12px;line-height:16px;color:#000;letter-spacing:-0.484px;">BIG MEAT CO</span>
<span class="t" style="left:388.40px;top:386.84px;font-size:12px;line-height:16px;color:#0000ff;letter-spacing:-0.209px;text-decoration:underline;">BMCO-266185</span>
<span class="t" style="left:548.90px;top:386.84px;font-size:12px;line-height:16px;color:#000;letter-spacing:-0.084px;">Planning</span>
<span class="t" style="left:625.00px;top:386.84px;font-size:12px;line-height:16px;color:#000;letter-spacing:0.041px;">Confirmed</span>
<span class="t" style="left:713.70px;top:386.84px;font-size:12px;line-height:16px;color:#000;letter-spacing:-0.299px;">Frozen</span>
<span class="t" style="left:809.60px;top:386.84px;font-size:12px;line-height:16px;color:#000;letter-spacing:0.337px;">No</span>
<span class="t" style="left:858.80px;top:386.84px;font-size:12px;line-height:16px;color:#000;letter-spacing:0.337px;">No</span>
<span class="t" style="left:990.40px;top:386.84px;font-size:12px;line-height:16px;color:#000;letter-spacing:-0.155px;">Plant</span>
<span class="t" style="left:1053.50px;top:386.84px;font-size:12px;line-height:16px;color:#000;letter-spacing:-0.633px;">Busan, KR</span>
<span class="t" style="left:1140.50px;top:386.84px;font-size:12px;line-height:16px;color:#000;letter-spacing:-0.433px;">January FH</span>
<span class="t" style="left:1232.20px;top:386.84px;font-size:12px;line-height:16px;color:#000;letter-spacing:-0.165px;">Jan-15-2025</span>
<span class="t" style="left:1387.50px;top:386.84px;font-size:12px;line-height:16px;color:#000;letter-spacing:-0.066px;">Floor</span>
<span class="t" style="left:1469.10px;top:386.84px;font-size:12px;line-height:16px;color:#000;letter-spacing:-0.205px;">161</span>
<span class="t" style="left:268.40px;top:407.84px;font-size:12px;line-height:16px;color:#000;letter-spacing:-0.484px;">BIG MEAT CO</span>
<span class="t" style="left:388.40px;top:407.84px;font-size:12px;line-height:16px;color:#0000ff;letter-spacing:-0.209px;text-decoration:underline;">BMCO-266186</span>
<span class="t" style="left:548.90px;top:407.84px;font-size:12px;line-height:16px;color:#000;letter-spacing:-0.084px;">Planning</span>
<span class="t" style="left:625.00px;top:407.84px;font-size:12px;line-height:16px;color:#000;letter-spacing:0.041px;">Confirmed</span>
<span class="t" style="left:713.70px;top:407.84px;font-size:12px;line-height:16px;color:#000;letter-spacing:-0.299px;">Frozen</span>
<span class="t" style="left:809.60px;top:407.84px;font-size:12px;line-height:16px;color:#000;letter-spacing:0.337px;">No</span>
<span class="t" style="left:858.80px;top:407.84px;font-size:12px;line-height:16px;color:#000;letter-spacing:0.337px;">No</span>
<span class="t" style="left:990.40px;top:407.84px;font-size:12px;line-height:16px;color:#000;letter-spacing:-0.155px;">Plant</span>
<span class="t" style="left:1053.50px;top:407.84px;font-size:12px;line-height:16px;color:#000;letter-spacing:-0.633px;">Busan, KR</span>
<span class="t" style="left:1140.50px;top:407.84px;font-size:12px;line-height:16px;color:#000;letter-spacing:-0.389px;">January LH</span>
<span class="t" style="left:1232.20px;top:407.84px;font-size:12px;line-height:16px;color:#000;letter-spacing:-0.165px;">Jan-20-2025</span>
<span class="t" style="left:1387.50px;top:407.84px;font-size:12px;line-height:16px;color:#000;letter-spacing:-0.066px;">Floor</span>
<span class="t" style="left:1469.10px;top:407.84px;font-size:12px;line-height:16px;color:#000;letter-spacing:0.092px;">116</span>
<span class="t" style="left:268.40px;top:428.84px;font-size:12px;line-height:16px;color:#000;letter-spacing:-0.484px;">BIG MEAT CO</span>
<span class="t" style="left:388.40px;top:428.84px;font-size:12px;line-height:16px;color:#0000ff;letter-spacing:-0.209px;text-decoration:underline;">BMCO-266187</span>
<span class="t" style="left:548.90px;top:428.84px;font-size:12px;line-height:16px;color:#000;letter-spacing:-0.084px;">Planning</span>
<span class="t" style="left:625.00px;top:428.84px;font-size:12px;line-height:16px;color:#000;letter-spacing:0.041px;">Confirmed</span>
<span class="t" style="left:713.70px;top:428.84px;font-size:12px;line-height:16px;color:#000;letter-spacing:-0.299px;">Frozen</span>
<span class="t" style="left:809.60px;top:428.84px;font-size:12px;line-height:16px;color:#000;letter-spacing:0.337px;">No</span>
<span class="t" style="left:858.80px;top:428.84px;font-size:12px;line-height:16px;color:#000;letter-spacing:0.337px;">No</span>
<span class="t" style="left:990.40px;top:428.84px;font-size:12px;line-height:16px;color:#000;letter-spacing:-0.155px;">Plant</span>
<span class="t" style="left:1053.50px;top:428.84px;font-size:12px;line-height:16px;color:#000;letter-spacing:-0.633px;">Busan, KR</span>
<span class="t" style="left:1140.50px;top:428.84px;font-size:12px;line-height:16px;color:#000;letter-spacing:-0.389px;">January LH</span>
<span class="t" style="left:1232.20px;top:428.84px;font-size:12px;line-height:16px;color:#000;letter-spacing:-0.165px;">Jan-27-2025</span>
<span class="t" style="left:1387.50px;top:428.84px;font-size:12px;line-height:16px;color:#000;letter-spacing:-0.066px;">Floor</span>
<span class="t" style="left:1469.10px;top:428.84px;font-size:12px;line-height:16px;color:#000;letter-spacing:-0.205px;">155</span>
<span class="t" style="left:268.40px;top:449.84px;font-size:12px;line-height:16px;color:#000;letter-spacing:-0.484px;">BIG MEAT CO</span>
<span class="t" style="left:388.40px;top:449.84px;font-size:12px;line-height:16px;color:#0000ff;letter-spacing:-0.209px;text-decoration:underline;">BMCO-266188</span>
<span class="t" style="left:548.90px;top:449.84px;font-size:12px;line-height:16px;color:#000;letter-spacing:-0.084px;">Planning</span>
<span class="t" style="left:625.00px;top:449.84px;font-size:12px;line-height:16px;color:#000;letter-spacing:0.041px;">Confirmed</span>
<span class="t" style="left:713.70px;top:449.84px;font-size:12px;line-height:16px;color:#000;letter-spacing:-0.299px;">Frozen</span>
<span class="t" style="left:809.60px;top:449.84px;font-size:12px;line-height:16px;color:#000;letter-spacing:0.337px;">No</span>
<span class="t" style="left:858.80px;top:449.84px;font-size:12px;line-height:16px;color:#000;letter-spacing:0.337px;">No</span>
<span class="t" style="left:990.40px;top:449.84px;font-size:12px;line-height:16px;color:#000;letter-spacing:-0.155px;">Plant</span>
<span class="t" style="left:1053.50px;top:449.84px;font-size:12px;line-height:16px;color:#000;letter-spacing:-0.633px;">Busan, KR</span>
<span class="t" style="left:1140.50px;top:449.84px;font-size:12px;line-height:16px;color:#000;letter-spacing:-0.314px;">February FH</span>
<span class="t" style="left:1232.20px;top:449.84px;font-size:12px;line-height:16px;color:#000;letter-spacing:-0.091px;">Feb-3-2025</span>
<span class="t" style="left:1387.50px;top:449.84px;font-size:12px;line-height:16px;color:#000;letter-spacing:-0.066px;">Floor</span>
<span class="t" style="left:1469.10px;top:449.84px;font-size:12px;line-height:16px;color:#000;letter-spacing:-0.205px;">139</span>
<span class="t" style="left:268.40px;top:470.84px;font-size:12px;line-height:16px;color:#000;letter-spacing:-0.484px;">BIG MEAT CO</span>
<span class="t" style="left:388.40px;top:470.84px;font-size:12px;line-height:16px;color:#0000ff;letter-spacing:-0.209px;text-decoration:underline;">BMCO-266189</span>
<span class="t" style="left:548.90px;top:470.84px;font-size:12px;line-height:16px;color:#000;letter-spacing:-0.084px;">Planning</span>
<span class="t" style="left:625.00px;top:470.84px;font-size:12px;line-height:16px;color:#000;letter-spacing:0.041px;">Confirmed</span>
<span class="t" style="left:713.70px;top:470.84px;font-size:12px;line-height:16px;color:#000;letter-spacing:-0.299px;">Frozen</span>
<span class="t" style="left:809.60px;top:470.84px;font-size:12px;line-height:16px;color:#000;letter-spacing:0.337px;">No</span>
<span class="t" style="left:858.80px;top:470.84px;font-size:12px;line-height:16px;color:#000;letter-spacing:0.337px;">No</span>
<span class="t" style="left:990.40px;top:470.84px;font-size:12px;line-height:16px;color:#000;letter-spacing:-0.155px;">Plant</span>
<span class="t" style="left:1053.50px;top:470.84px;font-size:12px;line-height:16px;color:#000;letter-spacing:-0.633px;">Busan, KR</span>
<span class="t" style="left:1140.50px;top:470.84px;font-size:12px;line-height:16px;color:#000;letter-spacing:-0.314px;">February FH</span>
<span class="t" style="left:1232.20px;top:470.84px;font-size:12px;line-height:16px;color:#000;letter-spacing:-0.101px;">Feb-10-2025</span>
<span class="t" style="left:1387.50px;top:470.84px;font-size:12px;line-height:16px;color:#000;letter-spacing:-0.066px;">Floor</span>
<span class="t" style="left:1469.10px;top:470.84px;font-size:12px;line-height:16px;color:#000;letter-spacing:-0.205px;">177</span>
<span class="t" style="left:268.40px;top:491.84px;font-size:12px;line-height:16px;color:#000;letter-spacing:-0.484px;">BIG MEAT CO</span>
<span class="t" style="left:388.40px;top:491.84px;font-size:12px;line-height:16px;color:#0000ff;letter-spacing:-0.209px;text-decoration:underline;">BMCO-266190</span>
<span class="t" style="left:548.90px;top:491.84px;font-size:12px;line-height:16px;color:#000;letter-spacing:-0.084px;">Planning</span>
<span class="t" style="left:625.00px;top:491.84px;font-size:12px;line-height:16px;color:#000;letter-spacing:0.041px;">Confirmed</span>
<span class="t" style="left:713.70px;top:491.84px;font-size:12px;line-height:16px;color:#000;letter-spacing:-0.299px;">Frozen</span>
<span class="t" style="left:809.60px;top:491.84px;font-size:12px;line-height:16px;color:#000;letter-spacing:0.337px;">No</span>
<span class="t" style="left:858.80px;top:491.84px;font-size:12px;line-height:16px;color:#000;letter-spacing:0.337px;">No</span>
<span class="t" style="left:990.40px;top:491.84px;font-size:12px;line-height:16px;color:#000;letter-spacing:-0.155px;">Plant</span>
<span class="t" style="left:1053.50px;top:491.84px;font-size:12px;line-height:16px;color:#000;letter-spacing:-0.633px;">Busan, KR</span>
<span class="t" style="left:1140.50px;top:491.84px;font-size:12px;line-height:16px;color:#000;letter-spacing:-0.274px;">February LH</span>
<span class="t" style="left:1232.20px;top:491.84px;font-size:12px;line-height:16px;color:#000;letter-spacing:-0.101px;">Feb-17-2025</span>
<span class="t" style="left:1387.50px;top:491.84px;font-size:12px;line-height:16px;color:#000;letter-spacing:-0.066px;">Floor</span>
<span class="t" style="left:1469.10px;top:491.84px;font-size:12px;line-height:16px;color:#000;letter-spacing:-0.205px;">125</span>
<div class="b" style="left:245.20px;top:510.50px;width:1241.30px;height:21.00px;background:#ffb6c1;"></div>
<span class="t" style="left:268.40px;top:512.84px;font-size:12px;line-height:16px;color:#000;letter-spacing:-0.573px;">CHOAM MERCANTILE</span>
<span class="t" style="left:388.40px;top:512.84px;font-size:12px;line-height:16px;color:#0000ff;letter-spacing:-0.205px;text-decoration:underline;">12345</span>
<span class="t" style="left:548.90px;top:512.84px;font-size:12px;line-height:16px;color:#000;letter-spacing:0.178px;">Not Verified</span>
<span class="t" style="left:625.00px;top:512.84px;font-size:12px;line-height:16px;color:#000;letter-spacing:-1.450px;">CSR</span>
<span class="t" style="left:713.70px;top:512.84px;font-size:12px;line-height:16px;color:#000;letter-spacing:-0.499px;">Fresh</span>
<span class="t" style="left:809.60px;top:512.84px;font-size:12px;line-height:16px;color:#000;letter-spacing:0.337px;">No</span>
<span class="t" style="left:858.80px;top:512.84px;font-size:12px;line-height:16px;color:#000;letter-spacing:0.337px;">No</span>
<span class="t" style="left:990.40px;top:512.84px;font-size:12px;line-height:16px;color:#000;letter-spacing:-0.155px;">Plant</span>
<span class="t" style="left:1140.50px;top:512.84px;font-size:12px;line-height:16px;color:#000;letter-spacing:-0.204px;">March FH</span>
<span class="t" style="left:1232.20px;top:512.84px;font-size:12px;line-height:16px;color:#000;letter-spacing:0.069px;">Mar-12-2025</span>
<span class="t" style="left:1469.10px;top:512.84px;font-size:12px;line-height:16px;color:#000;letter-spacing:-0.205px;">850</span>
<span class="t" style="left:268.40px;top:533.84px;font-size:12px;line-height:16px;color:#000;letter-spacing:-0.573px;">CHOAM MERCANTILE</span>
<span class="t" style="left:388.40px;top:533.84px;font-size:12px;line-height:16px;color:#0000ff;letter-spacing:-0.103px;text-decoration:underline;">CHM-259870</span>
<span class="t" style="left:548.90px;top:533.84px;font-size:12px;line-height:16px;color:#000;letter-spacing:-0.084px;">Planning</span>
<span class="t" style="left:625.00px;top:533.84px;font-size:12px;line-height:16px;color:#000;letter-spacing:0.041px;">Confirmed</span>
<span class="t" style="left:713.70px;top:533.84px;font-size:12px;line-height:16px;color:#000;letter-spacing:-0.299px;">Frozen</span>
<span class="t" style="left:809.60px;top:533.84px;font-size:12px;line-height:16px;color:#000;letter-spacing:0.337px;">No</span>
<span class="t" style="left:858.80px;top:533.84px;font-size:12px;line-height:16px;color:#000;letter-spacing:0.337px;">No</span>
<span class="t" style="left:990.40px;top:533.84px;font-size:12px;line-height:16px;color:#000;letter-spacing:-0.155px;">Plant</span>
<span class="t" style="left:1053.50px;top:533.84px;font-size:12px;line-height:16px;color:#000;letter-spacing:-0.333px;">Tokyo, JP</span>
<span class="t" style="left:1140.50px;top:533.84px;font-size:12px;line-height:16px;color:#000;letter-spacing:-0.204px;">December LH</span>
<span class="t" style="left:1232.20px;top:533.84px;font-size:12px;line-height:16px;color:#000;letter-spacing:-0.066px;">Dec-23-2024</span>
<span class="t" style="left:1387.50px;top:533.84px;font-size:12px;line-height:16px;color:#000;letter-spacing:-0.066px;">Floor</span>
<span class="t" style="left:1469.10px;top:533.84px;font-size:12px;line-height:16px;color:#000;letter-spacing:-0.205px;">172</span>
<span class="t" style="left:268.40px;top:554.84px;font-size:12px;line-height:16px;color:#000;letter-spacing:-0.573px;">CHOAM MERCANTILE</span>
<span class="t" style="left:388.40px;top:554.84px;font-size:12px;line-height:16px;color:#0000ff;letter-spacing:-0.103px;text-decoration:underline;">CHM-263642</span>
<span class="t" style="left:548.90px;top:554.84px;font-size:12px;line-height:16px;color:#000;letter-spacing:-0.084px;">Planning</span>
<span class="t" style="left:625.00px;top:554.84px;font-size:12px;line-height:16px;color:#000;letter-spacing:0.041px;">Confirmed</span>
<span class="t" style="left:713.70px;top:554.84px;font-size:12px;line-height:16px;color:#000;letter-spacing:-0.299px;">Frozen</span>
<span class="t" style="left:809.60px;top:554.84px;font-size:12px;line-height:16px;color:#000;letter-spacing:0.337px;">No</span>
<span class="t" style="left:858.80px;top:554.84px;font-size:12px;line-height:16px;color:#000;letter-spacing:0.337px;">No</span>
<span class="t" style="left:990.40px;top:554.84px;font-size:12px;line-height:16px;color:#000;letter-spacing:-0.155px;">Plant</span>
<span class="t" style="left:1053.50px;top:554.84px;font-size:12px;line-height:16px;color:#000;letter-spacing:-0.333px;">Tokyo, JP</span>
<span class="t" style="left:1140.50px;top:554.84px;font-size:12px;line-height:16px;color:#000;letter-spacing:-0.204px;">December LH</span>
<span class="t" style="left:1232.20px;top:554.84px;font-size:12px;line-height:16px;color:#000;letter-spacing:-0.066px;">Dec-16-2024</span>
<span class="t" style="left:1387.50px;top:554.84px;font-size:12px;line-height:16px;color:#000;letter-spacing:-0.066px;">Floor</span>
<span class="t" style="left:1469.10px;top:554.84px;font-size:12px;line-height:16px;color:#000;letter-spacing:-0.205px;">164</span>
<span class="t" style="left:268.40px;top:575.84px;font-size:12px;line-height:16px;color:#000;letter-spacing:-0.573px;">CHOAM MERCANTILE</span>
<span class="t" style="left:388.40px;top:575.84px;font-size:12px;line-height:16px;color:#0000ff;letter-spacing:-0.103px;text-decoration:underline;">CHM-263644</span>
<span class="t" style="left:548.90px;top:575.84px;font-size:12px;line-height:16px;color:#000;letter-spacing:-0.084px;">Planning</span>
<span class="t" style="left:625.00px;top:575.84px;font-size:12px;line-height:16px;color:#000;letter-spacing:0.041px;">Confirmed</span>
<span class="t" style="left:713.70px;top:575.84px;font-size:12px;line-height:16px;color:#000;letter-spacing:-0.299px;">Frozen</span>
<span class="t" style="left:809.60px;top:575.84px;font-size:12px;line-height:16px;color:#000;letter-spacing:0.337px;">No</span>
<span class="t" style="left:858.80px;top:575.84px;font-size:12px;line-height:16px;color:#000;letter-spacing:0.337px;">No</span>
<span class="t" style="left:990.40px;top:575.84px;font-size:12px;line-height:16px;color:#000;letter-spacing:-0.155px;">Plant</span>
<span class="t" style="left:1053.50px;top:575.84px;font-size:12px;line-height:16px;color:#000;letter-spacing:-0.333px;">Tokyo, JP</span>
<span class="t" style="left:1140.50px;top:575.84px;font-size:12px;line-height:16px;color:#000;letter-spacing:-0.204px;">December LH</span>
<span class="t" style="left:1232.20px;top:575.84px;font-size:12px;line-height:16px;color:#000;letter-spacing:-0.066px;">Dec-23-2024</span>
<span class="t" style="left:1387.50px;top:575.84px;font-size:12px;line-height:16px;color:#000;letter-spacing:-0.066px;">Floor</span>
<span class="t" style="left:1469.10px;top:575.84px;font-size:12px;line-height:16px;color:#000;letter-spacing:-0.205px;">120</span>
<span class="t" style="left:268.40px;top:596.84px;font-size:12px;line-height:16px;color:#000;letter-spacing:-0.573px;">CHOAM MERCANTILE</span>
<span class="t" style="left:388.40px;top:596.84px;font-size:12px;line-height:16px;color:#0000ff;letter-spacing:-0.103px;text-decoration:underline;">CHM-263645</span>
<span class="t" style="left:548.90px;top:596.84px;font-size:12px;line-height:16px;color:#000;letter-spacing:-0.084px;">Planning</span>
<span class="t" style="left:625.00px;top:596.84px;font-size:12px;line-height:16px;color:#000;letter-spacing:0.041px;">Confirmed</span>
<span class="t" style="left:713.70px;top:596.84px;font-size:12px;line-height:16px;color:#000;letter-spacing:-0.299px;">Frozen</span>
<span class="t" style="left:809.60px;top:596.84px;font-size:12px;line-height:16px;color:#000;letter-spacing:0.337px;">No</span>
<span class="t" style="left:858.80px;top:596.84px;font-size:12px;line-height:16px;color:#000;letter-spacing:0.337px;">No</span>
<span class="t" style="left:990.40px;top:596.84px;font-size:12px;line-height:16px;color:#000;letter-spacing:-0.155px;">Plant</span>
<span class="t" style="left:1053.50px;top:596.84px;font-size:12px;line-height:16px;color:#000;letter-spacing:-0.333px;">Tokyo, JP</span>
<span class="t" style="left:1140.50px;top:596.84px;font-size:12px;line-height:16px;color:#000;letter-spacing:-0.433px;">January FH</span>
<span class="t" style="left:1232.20px;top:596.84px;font-size:12px;line-height:16px;color:#000;letter-spacing:-0.161px;">Jan-2-2025</span>
<span class="t" style="left:1387.50px;top:596.84px;font-size:12px;line-height:16px;color:#000;letter-spacing:-0.066px;">Floor</span>
<span class="t" style="left:1469.10px;top:596.84px;font-size:12px;line-height:16px;color:#000;letter-spacing:-0.205px;">153</span>
<span class="t" style="left:268.40px;top:617.84px;font-size:12px;line-height:16px;color:#000;letter-spacing:-0.573px;">CHOAM MERCANTILE</span>
<span class="t" style="left:388.40px;top:617.84px;font-size:12px;line-height:16px;color:#0000ff;letter-spacing:-0.103px;text-decoration:underline;">CHM-265307</span>
<span class="t" style="left:548.90px;top:617.84px;font-size:12px;line-height:16px;color:#000;letter-spacing:-0.084px;">Planning</span>
<span class="t" style="left:625.00px;top:617.84px;font-size:12px;line-height:16px;color:#000;letter-spacing:0.041px;">Confirmed</span>
<span class="t" style="left:713.70px;top:617.84px;font-size:12px;line-height:16px;color:#000;letter-spacing:-0.299px;">Frozen</span>
<span class="t" style="left:809.60px;top:617.84px;font-size:12px;line-height:16px;color:#000;letter-spacing:0.337px;">No</span>
<span class="t" style="left:858.80px;top:617.84px;font-size:12px;line-height:16px;color:#000;letter-spacing:0.337px;">No</span>
<span class="t" style="left:990.40px;top:617.84px;font-size:12px;line-height:16px;color:#000;letter-spacing:-0.155px;">Plant</span>
<span class="t" style="left:1053.50px;top:617.84px;font-size:12px;line-height:16px;color:#000;letter-spacing:-0.333px;">Tokyo, JP</span>
<span class="t" style="left:1140.50px;top:617.84px;font-size:12px;line-height:16px;color:#000;letter-spacing:-0.244px;">December FH</span>
<span class="t" style="left:1232.20px;top:617.84px;font-size:12px;line-height:16px;color:#000;letter-spacing:-0.052px;">Dec-2-2024</span>
<span class="t" style="left:1387.50px;top:617.84px;font-size:12px;line-height:16px;color:#000;letter-spacing:-0.066px;">Floor</span>
<span class="t" style="left:1469.10px;top:617.84px;font-size:12px;line-height:16px;color:#000;letter-spacing:-0.205px;">178</span>
<span class="t" style="left:268.40px;top:638.84px;font-size:12px;line-height:16px;color:#000;letter-spacing:-0.573px;">CHOAM MERCANTILE</span>
<span class="t" style="left:388.40px;top:638.84px;font-size:12px;line-height:16px;color:#0000ff;letter-spacing:-0.103px;text-decoration:underline;">CHM-265308</span>
<span class="t" style="left:548.90px;top:638.84px;font-size:12px;line-height:16px;color:#000;letter-spacing:-0.084px;">Planning</span>
<span class="t" style="left:625.00px;top:638.84px;font-size:12px;line-height:16px;color:#000;letter-spacing:0.041px;">Confirmed</span>
<span class="t" style="left:713.70px;top:638.84px;font-size:12px;line-height:16px;color:#000;letter-spacing:-0.299px;">Frozen</span>
<span class="t" style="left:809.60px;top:638.84px;font-size:12px;line-height:16px;color:#000;letter-spacing:0.337px;">No</span>
<span class="t" style="left:858.80px;top:638.84px;font-size:12px;line-height:16px;color:#000;letter-spacing:0.337px;">No</span>
<span class="t" style="left:990.40px;top:638.84px;font-size:12px;line-height:16px;color:#000;letter-spacing:-0.155px;">Plant</span>
<span class="t" style="left:1053.50px;top:638.84px;font-size:12px;line-height:16px;color:#000;letter-spacing:-0.333px;">Tokyo, JP</span>
<span class="t" style="left:1140.50px;top:638.84px;font-size:12px;line-height:16px;color:#000;letter-spacing:-0.244px;">December FH</span>
<span class="t" style="left:1232.20px;top:638.84px;font-size:12px;line-height:16px;color:#000;letter-spacing:-0.052px;">Dec-9-2024</span>
<span class="t" style="left:1387.50px;top:638.84px;font-size:12px;line-height:16px;color:#000;letter-spacing:-0.066px;">Floor</span>
<span class="t" style="left:1469.10px;top:638.84px;font-size:12px;line-height:16px;color:#000;letter-spacing:-0.205px;">180</span>
<span class="t" style="left:268.40px;top:659.84px;font-size:12px;line-height:16px;color:#000;letter-spacing:-0.573px;">CHOAM MERCANTILE</span>
<span class="t" style="left:388.40px;top:659.84px;font-size:12px;line-height:16px;color:#0000ff;letter-spacing:-0.103px;text-decoration:underline;">CHM-265309</span>
<span class="t" style="left:548.90px;top:659.84px;font-size:12px;line-height:16px;color:#000;letter-spacing:-0.084px;">Planning</span>
<span class="t" style="left:625.00px;top:659.84px;font-size:12px;line-height:16px;color:#000;letter-spacing:0.041px;">Confirmed</span>
<span class="t" style="left:713.70px;top:659.84px;font-size:12px;line-height:16px;color:#000;letter-spacing:-0.299px;">Frozen</span>
<span class="t" style="left:809.60px;top:659.84px;font-size:12px;line-height:16px;color:#000;letter-spacing:0.337px;">No</span>
<span class="t" style="left:858.80px;top:659.84px;font-size:12px;line-height:16px;color:#000;letter-spacing:0.337px;">No</span>
<span class="t" style="left:990.40px;top:659.84px;font-size:12px;line-height:16px;color:#000;letter-spacing:-0.155px;">Plant</span>
<span class="t" style="left:1053.50px;top:659.84px;font-size:12px;line-height:16px;color:#000;letter-spacing:-0.333px;">Tokyo, JP</span>
<span class="t" style="left:1140.50px;top:659.84px;font-size:12px;line-height:16px;color:#000;letter-spacing:-0.204px;">December LH</span>
<span class="t" style="left:1232.20px;top:659.84px;font-size:12px;line-height:16px;color:#000;letter-spacing:-0.066px;">Dec-16-2024</span>
<span class="t" style="left:1387.50px;top:659.84px;font-size:12px;line-height:16px;color:#000;letter-spacing:-0.066px;">Floor</span>
<span class="t" style="left:1469.10px;top:659.84px;font-size:12px;line-height:16px;color:#000;letter-spacing:-0.205px;">143</span>
<span class="t" style="left:268.40px;top:680.84px;font-size:12px;line-height:16px;color:#000;letter-spacing:-0.573px;">CHOAM MERCANTILE</span>
<span class="t" style="left:388.40px;top:680.84px;font-size:12px;line-height:16px;color:#0000ff;letter-spacing:-0.103px;text-decoration:underline;">CHM-265310</span>
<span class="t" style="left:548.90px;top:680.84px;font-size:12px;line-height:16px;color:#000;letter-spacing:-0.084px;">Planning</span>
<span class="t" style="left:625.00px;top:680.84px;font-size:12px;line-height:16px;color:#000;letter-spacing:0.041px;">Confirmed</span>
<span class="t" style="left:713.70px;top:680.84px;font-size:12px;line-height:16px;color:#000;letter-spacing:-0.299px;">Frozen</span>
<span class="t" style="left:809.60px;top:680.84px;font-size:12px;line-height:16px;color:#000;letter-spacing:0.337px;">No</span>
<span class="t" style="left:858.80px;top:680.84px;font-size:12px;line-height:16px;color:#000;letter-spacing:0.337px;">No</span>
<span class="t" style="left:990.40px;top:680.84px;font-size:12px;line-height:16px;color:#000;letter-spacing:-0.155px;">Plant</span>
<span class="t" style="left:1053.50px;top:680.84px;font-size:12px;line-height:16px;color:#000;letter-spacing:-0.333px;">Tokyo, JP</span>
<span class="t" style="left:1140.50px;top:680.84px;font-size:12px;line-height:16px;color:#000;letter-spacing:-0.204px;">December LH</span>
<span class="t" style="left:1232.20px;top:680.84px;font-size:12px;line-height:16px;color:#000;letter-spacing:-0.066px;">Dec-23-2024</span>
<span class="t" style="left:1387.50px;top:680.84px;font-size:12px;line-height:16px;color:#000;letter-spacing:-0.066px;">Floor</span>
<span class="t" style="left:1469.10px;top:680.84px;font-size:12px;line-height:16px;color:#000;letter-spacing:-0.205px;">132</span>
<span class="t" style="left:268.40px;top:701.84px;font-size:12px;line-height:16px;color:#000;letter-spacing:-0.573px;">CHOAM MERCANTILE</span>
<span class="t" style="left:388.40px;top:701.84px;font-size:12px;line-height:16px;color:#0000ff;letter-spacing:-0.103px;text-decoration:underline;">CHM-266803</span>
<span class="t" style="left:548.90px;top:701.84px;font-size:12px;line-height:16px;color:#000;letter-spacing:-0.084px;">Planning</span>
<span class="t" style="left:625.00px;top:701.84px;font-size:12px;line-height:16px;color:#000;letter-spacing:0.041px;">Confirmed</span>
<span class="t" style="left:713.70px;top:701.84px;font-size:12px;line-height:16px;color:#000;letter-spacing:-0.299px;">Frozen</span>
<span class="t" style="left:809.60px;top:701.84px;font-size:12px;line-height:16px;color:#000;letter-spacing:0.337px;">No</span>
<span class="t" style="left:858.80px;top:701.84px;font-size:12px;line-height:16px;color:#000;letter-spacing:0.337px;">No</span>
<span class="t" style="left:990.40px;top:701.84px;font-size:12px;line-height:16px;color:#000;letter-spacing:-0.155px;">Plant</span>
<span class="t" style="left:1053.50px;top:701.84px;font-size:12px;line-height:16px;color:#000;letter-spacing:-0.333px;">Tokyo, JP</span>
<span class="t" style="left:1140.50px;top:701.84px;font-size:12px;line-height:16px;color:#000;letter-spacing:-0.204px;">March FH</span>
<span class="t" style="left:1232.20px;top:701.84px;font-size:12px;line-height:16px;color:#000;letter-spacing:0.096px;">Mar-3-2025</span>
<span class="t" style="left:1387.50px;top:701.84px;font-size:12px;line-height:16px;color:#000;letter-spacing:-0.066px;">Floor</span>
<span class="t" style="left:1469.10px;top:701.84px;font-size:12px;line-height:16px;color:#000;letter-spacing:-0.205px;">180</span>
<span class="t" style="left:268.40px;top:722.84px;font-size:12px;line-height:16px;color:#000;letter-spacing:-0.573px;">CHOAM MERCANTILE</span>
<span class="t" style="left:388.40px;top:722.84px;font-size:12px;line-height:16px;color:#0000ff;letter-spacing:-0.103px;text-decoration:underline;">CHM-266804</span>
<span class="t" style="left:548.90px;top:722.84px;font-size:12px;line-height:16px;color:#000;letter-spacing:-0.084px;">Planning</span>
<span class="t" style="left:625.00px;top:722.84px;font-size:12px;line-height:16px;color:#000;letter-spacing:0.041px;">Confirmed</span>
<span class="t" style="left:713.70px;top:722.84px;font-size:12px;line-height:16px;color:#000;letter-spacing:-0.299px;">Frozen</span>
<span class="t" style="left:809.60px;top:722.84px;font-size:12px;line-height:16px;color:#000;letter-spacing:0.337px;">No</span>
<span class="t" style="left:858.80px;top:722.84px;font-size:12px;line-height:16px;color:#000;letter-spacing:0.337px;">No</span>
<span class="t" style="left:990.40px;top:722.84px;font-size:12px;line-height:16px;color:#000;letter-spacing:-0.155px;">Plant</span>
<span class="t" style="left:1053.50px;top:722.84px;font-size:12px;line-height:16px;color:#000;letter-spacing:-0.333px;">Tokyo, JP</span>
<span class="t" style="left:1140.50px;top:722.84px;font-size:12px;line-height:16px;color:#000;letter-spacing:-0.204px;">March FH</span>
<span class="t" style="left:1232.20px;top:722.84px;font-size:12px;line-height:16px;color:#000;letter-spacing:0.069px;">Mar-10-2025</span>
<span class="t" style="left:1387.50px;top:722.84px;font-size:12px;line-height:16px;color:#000;letter-spacing:-0.066px;">Floor</span>
<span class="t" style="left:1469.10px;top:722.84px;font-size:12px;line-height:16px;color:#000;letter-spacing:-0.205px;">188</span>
<span class="t" style="left:268.40px;top:743.84px;font-size:12px;line-height:16px;color:#000;letter-spacing:-0.573px;">CHOAM MERCANTILE</span>
<span class="t" style="left:388.40px;top:743.84px;font-size:12px;line-height:16px;color:#0000ff;letter-spacing:-0.103px;text-decoration:underline;">CHM-266805</span>
<span class="t" style="left:548.90px;top:743.84px;font-size:12px;line-height:16px;color:#000;letter-spacing:-0.084px;">Planning</span>
<span class="t" style="left:625.00px;top:743.84px;font-size:12px;line-height:16px;color:#000;letter-spacing:0.041px;">Confirmed</span>
<span class="t" style="left:713.70px;top:743.84px;font-size:12px;line-height:16px;color:#000;letter-spacing:-0.299px;">Frozen</span>
<span class="t" style="left:809.60px;top:743.84px;font-size:12px;line-height:16px;color:#000;letter-spacing:0.337px;">No</span>
<span class="t" style="left:858.80px;top:743.84px;font-size:12px;line-height:16px;color:#000;letter-spacing:0.337px;">No</span>
<span class="t" style="left:990.40px;top:743.84px;font-size:12px;line-height:16px;color:#000;letter-spacing:-0.155px;">Plant</span>
<span class="t" style="left:1053.50px;top:743.84px;font-size:12px;line-height:16px;color:#000;letter-spacing:-0.333px;">Tokyo, JP</span>
<span class="t" style="left:1140.50px;top:743.84px;font-size:12px;line-height:16px;color:#000;letter-spacing:-0.148px;">March LH</span>
<span class="t" style="left:1232.20px;top:743.84px;font-size:12px;line-height:16px;color:#000;letter-spacing:0.069px;">Mar-17-2025</span>
<span class="t" style="left:1387.50px;top:743.84px;font-size:12px;line-height:16px;color:#000;letter-spacing:-0.066px;">Floor</span>
<span class="t" style="left:1469.10px;top:743.84px;font-size:12px;line-height:16px;color:#000;letter-spacing:-0.205px;">175</span>
<div class="b" style="left:245.20px;top:174.00px;width:1241.30px;height:1.00px;background:#000;"></div>
<div class="b" style="left:245.20px;top:195.00px;width:1241.30px;height:1.00px;background:#000;"></div>
<div class="b" style="left:245.20px;top:216.00px;width:1241.30px;height:1.00px;background:#000;"></div>
<div class="b" style="left:245.20px;top:237.00px;width:1241.30px;height:1.00px;background:#000;"></div>
<div class="b" style="left:245.20px;top:258.00px;width:1241.30px;height:1.00px;background:#000;"></div>
<div class="b" style="left:245.20px;top:279.00px;width:1241.30px;height:1.00px;background:#000;"></div>
<div class="b" style="left:245.20px;top:300.00px;width:1241.30px;height:1.00px;background:#000;"></div>
<div class="b" style="left:245.20px;top:321.00px;width:1241.30px;height:1.00px;background:#000;"></div>
<div class="b" style="left:245.20px;top:342.00px;width:1241.30px;height:1.00px;background:#000;"></div>
<div class="b" style="left:245.20px;top:363.00px;width:1241.30px;height:1.00px;background:#000;"></div>
<div class="b" style="left:245.20px;top:384.00px;width:1241.30px;height:1.00px;background:#000;"></div>
<div class="b" style="left:245.20px;top:405.00px;width:1241.30px;height:1.00px;background:#000;"></div>
<div class="b" style="left:245.20px;top:426.00px;width:1241.30px;height:1.00px;background:#000;"></div>
<div class="b" style="left:245.20px;top:447.00px;width:1241.30px;height:1.00px;background:#000;"></div>
<div class="b" style="left:245.20px;top:468.00px;width:1241.30px;height:1.00px;background:#000;"></div>
<div class="b" style="left:245.20px;top:489.00px;width:1241.30px;height:1.00px;background:#000;"></div>
<div class="b" style="left:245.20px;top:510.00px;width:1241.30px;height:1.00px;background:#000;"></div>
<div class="b" style="left:245.20px;top:531.00px;width:1241.30px;height:1.00px;background:#000;"></div>
<div class="b" style="left:245.20px;top:552.00px;width:1241.30px;height:1.00px;background:#000;"></div>
<div class="b" style="left:245.20px;top:573.00px;width:1241.30px;height:1.00px;background:#000;"></div>
<div class="b" style="left:245.20px;top:594.00px;width:1241.30px;height:1.00px;background:#000;"></div>
<div class="b" style="left:245.20px;top:615.00px;width:1241.30px;height:1.00px;background:#000;"></div>
<div class="b" style="left:245.20px;top:636.00px;width:1241.30px;height:1.00px;background:#000;"></div>
<div class="b" style="left:245.20px;top:657.00px;width:1241.30px;height:1.00px;background:#000;"></div>
<div class="b" style="left:245.20px;top:678.00px;width:1241.30px;height:1.00px;background:#000;"></div>
<div class="b" style="left:245.20px;top:699.00px;width:1241.30px;height:1.00px;background:#000;"></div>
<div class="b" style="left:245.20px;top:720.00px;width:1241.30px;height:1.00px;background:#000;"></div>
<div class="b" style="left:245.20px;top:741.00px;width:1241.30px;height:1.00px;background:#000;"></div>
<div class="b" style="left:245.20px;top:762.00px;width:1241.30px;height:1.00px;background:#000;"></div>
<div class="b" style="left:245.20px;top:783.00px;width:1241.30px;height:1.00px;background:#000;"></div>
<div class="b" style="left:264.00px;top:153.50px;width:1.00px;height:612.00px;background:#000;"></div>
<div class="b" style="left:388.00px;top:153.50px;width:1.00px;height:612.00px;background:#000;"></div>
<div class="b" style="left:467.00px;top:153.50px;width:1.00px;height:612.00px;background:#000;"></div>
<div class="b" style="left:545.00px;top:153.50px;width:1.00px;height:612.00px;background:#000;"></div>
<div class="b" style="left:622.00px;top:153.50px;width:1.00px;height:612.00px;background:#000;"></div>
<div class="b" style="left:710.00px;top:153.50px;width:1.00px;height:612.00px;background:#000;"></div>
<div class="b" style="left:806.00px;top:153.50px;width:1.00px;height:612.00px;background:#000;"></div>
<div class="b" style="left:855.00px;top:153.50px;width:1.00px;height:612.00px;background:#000;"></div>
<div class="b" style="left:987.00px;top:153.50px;width:1.00px;height:612.00px;background:#000;"></div>
<div class="b" style="left:1050.00px;top:153.50px;width:1.00px;height:612.00px;background:#000;"></div>
<div class="b" style="left:1137.00px;top:153.50px;width:1.00px;height:612.00px;background:#000;"></div>
<div class="b" style="left:1231.00px;top:153.50px;width:1.00px;height:612.00px;background:#000;"></div>
<div class="b" style="left:1304.00px;top:153.50px;width:1.00px;height:612.00px;background:#000;"></div>
<div class="b" style="left:1384.00px;top:153.50px;width:1.00px;height:612.00px;background:#000;"></div>
<div class="b" style="left:1465.00px;top:153.50px;width:1.00px;height:612.00px;background:#000;"></div>
</div>
<svg style="left:248.1px;top:619px" width="13.6" height="13.6" viewBox="0 0 13.6 13.6"><defs><radialGradient id="rg" cx="0.4" cy="0.3" r="0.8"><stop offset="0" stop-color="#ff7a45"/><stop offset="0.55" stop-color="#f4400a"/><stop offset="1" stop-color="#c8320a"/></radialGradient></defs><circle cx="6.8" cy="6.8" r="6.8" fill="url(#rg)"/><rect x="5.8" y="2.6" width="2" height="5.4" rx="0.8" fill="#fff"/><rect x="5.8" y="9.1" width="2" height="2" rx="0.8" fill="#fff"/></svg>
<svg style="left:450px;top:328px" width="112" height="50" viewBox="450 328 112 50"><rect x="456.2" y="334.35" width="99.35" height="37.1" fill="none" stroke="#ff3a0c" stroke-width="2.7"/></svg>
<div class="b" style="left:1486.50px;top:130.50px;width:16.70px;height:634.00px;background:#f0f0f0;"></div>
<div class="b" style="left:1486.50px;top:224.00px;width:16.70px;height:56.00px;background:#cdcdcd;"></div>
<svg style="left:1490.5px;top:160.5px" width="9" height="6" viewBox="0 0 9 6" fill="none" stroke="#9a9a9a" stroke-width="1.1"><path d="M0.7 5.3L4.5 1.3L8.3 5.3"/></svg>
<svg style="left:1490.5px;top:754px" width="9" height="6" viewBox="0 0 9 6" fill="none" stroke="#9a9a9a" stroke-width="1.1"><path d="M0.7 0.7L4.5 4.7L8.3 0.7"/></svg>
<div class="b" style="left:239.70px;top:764.50px;width:1263.50px;height:17.40px;background:#f0f0f0;"></div>
<div class="b" style="left:262.30px;top:764.50px;width:812.20px;height:17.40px;background:#cdcdcd;"></div>
<svg style="left:250.5px;top:768.5px" width="6" height="9" viewBox="0 0 6 9" fill="none" stroke="#9a9a9a" stroke-width="1.1"><path d="M5.3 0.7L1.3 4.5L5.3 8.3"/></svg>
<svg style="left:1474.5px;top:768.5px" width="6" height="9" viewBox="0 0 6 9" fill="none" stroke="#9a9a9a" stroke-width="1.1"><path d="M0.7 0.7L4.7 4.5L0.7 8.3"/></svg>
<span class="t" style="left:242.80px;top:788.74px;font-size:12px;line-height:16px;color:#0000ff;letter-spacing:-0.233px;text-decoration:underline;">Save View Settings</span>
<span class="t" style="left:351.50px;top:788.74px;font-size:12px;line-height:16px;color:#0000ff;letter-spacing:-0.165px;text-decoration:underline;">Clear View Settings</span>
<div class="b" style="left:238.00px;top:809.30px;width:1256.80px;height:30.60px;background:#fff;border:2px solid #ababab;border-radius:4px;"></div>
<span class="t" style="left:279.20px;top:817.64px;font-size:12px;line-height:16px;color:#000;letter-spacing:-0.426px;font-weight:bold;">Rows</span>
<svg style="left:323.75px;top:817.5px" width="15" height="15" viewBox="0 0 15 15"><circle cx="7.5" cy="7.5" r="6.7" fill="#fff" stroke="#333" stroke-width="1.3"/></svg>
<span class="t" style="left:343.20px;top:817.64px;font-size:12px;line-height:16px;color:#111;letter-spacing:-0.084px;">Planning</span>
<svg style="left:404.75px;top:817.5px" width="15" height="15" viewBox="0 0 15 15"><circle cx="7.5" cy="7.5" r="7.2" fill="#ffb6c1"/></svg>
<span class="t" style="left:424.45px;top:817.64px;font-size:12px;line-height:16px;color:#111;letter-spacing:-0.011px;">New Order</span>
<svg style="left:497.75px;top:817.5px" width="15" height="15" viewBox="0 0 15 15"><circle cx="7.5" cy="7.5" r="7.2" fill="#ffff00"/></svg>
<span class="t" style="left:517.20px;top:817.64px;font-size:12px;line-height:16px;color:#111;letter-spacing:-0.077px;">Shipped</span>
<svg style="left:576.50px;top:817.5px" width="15" height="15" viewBox="0 0 15 15"><circle cx="7.5" cy="7.5" r="7.2" fill="#8fc73e"/></svg>
<span class="t" style="left:596.20px;top:817.64px;font-size:12px;line-height:16px;color:#111;letter-spacing:0.019px;">Shipped Not Billed</span>
<svg style="left:710.25px;top:817.5px" width="15" height="15" viewBox="0 0 15 15"><circle cx="7.5" cy="7.5" r="7.2" fill="#afeeee"/></svg>
<span class="t" style="left:730.20px;top:817.64px;font-size:12px;line-height:16px;color:#111;letter-spacing:-0.207px;">Revision Requested By Planning</span>
<svg style="left:913.00px;top:817.5px" width="15" height="15" viewBox="0 0 15 15"><circle cx="7.5" cy="7.5" r="7.2" fill="#e6e6fa"/></svg>
<span class="t" style="left:932.95px;top:817.64px;font-size:12px;line-height:16px;color:#111;letter-spacing:-0.613px;">Revised By CSR</span>
<svg style="left:1028.75px;top:817.5px" width="15" height="15" viewBox="0 0 15 15"><circle cx="7.5" cy="7.5" r="7.2" fill="#a9a9a9"/></svg>
<span class="t" style="left:1047.95px;top:817.64px;font-size:12px;line-height:16px;color:#111;letter-spacing:-0.233px;">Cancelled</span>
</body></html>
